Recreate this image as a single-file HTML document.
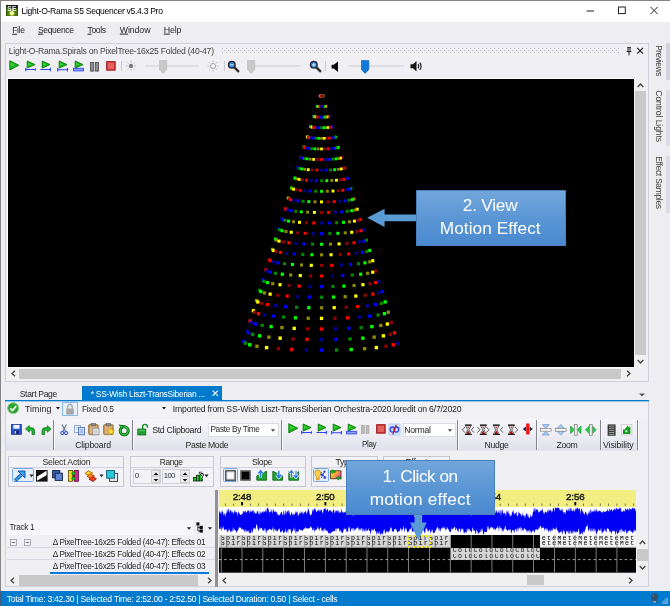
<!DOCTYPE html>
<html lang="en"><head><meta charset="utf-8"><title>Light-O-Rama S5 Sequencer</title>
<style>
html,body{margin:0;padding:0;}
body{width:670px;height:606px;overflow:hidden;background:#eeeef2;font-family:"Liberation Sans", sans-serif;position:relative;}
.b{position:absolute;box-sizing:border-box;display:block;}
.t{position:absolute;white-space:nowrap;line-height:1;transform:translateY(-50%);}
.t u{text-decoration:underline;text-underline-offset:1px;}
</style></head><body>
<div id="root" style="position:absolute;left:0;top:0;width:670px;height:606px;will-change:transform;">
<div class="b" style="left:0px;top:0px;width:670px;height:22px;background:#ffffff;"></div>
<div class="b" style="left:0px;top:0px;width:670px;height:1px;background:#868686;"></div>
<div class="b" style="left:0px;top:0px;width:1px;height:606px;background:#858585;"></div>
<svg class="b" style="left:6px;top:4.6px;" width="12" height="11.4" viewBox="0 0 12 11.4"><defs><radialGradient id="bg1"><stop offset="0" stop-color="#ffffff"/><stop offset="0.45" stop-color="#f4f48a"/><stop offset="1" stop-color="#8aa81a" stop-opacity="0"/></radialGradient></defs><rect x="0" y="0" width="12" height="11.4" fill="#4b7a0c"/><rect x="0" y="0" width="12" height="3.4" fill="#10160c"/><rect x="0" y="0.8" width="0.8" height="10.6" fill="#2c4a08"/><rect x="11.2" y="0.8" width="0.8" height="10.6" fill="#2c4a08"/><circle cx="5.9" cy="8.2" r="3.6" fill="url(#bg1)"/><text x="6" y="6.2" font-size="6.6" font-weight="bold" text-anchor="middle" fill="#f4f4f4" font-family="Liberation Sans, sans-serif" letter-spacing="0.3">SE</text></svg>
<svg class="b" style="left:580px;top:2px;" width="86" height="18" viewBox="0 0 86 18"><path d="M6.5 9 H14" stroke="#222" stroke-width="1" fill="none"/><rect x="38.5" y="5" width="6.8" height="6.6" stroke="#222" stroke-width="1" fill="none"/><path d="M70.6 5 L77.6 12 M77.6 5 L70.6 12" stroke="#222" stroke-width="1" fill="none"/></svg>
<div class="b" style="left:665.6px;top:43px;width:4.4px;height:37px;background:#d2d2df;"></div>
<div class="b" style="left:665.6px;top:89.5px;width:4.4px;height:56px;background:#dcdce7;"></div>
<div class="b" style="left:665.6px;top:155.5px;width:4.4px;height:57.5px;background:#dcdce7;"></div>
<div class="b" style="left:5px;top:43px;width:644px;height:339px;background:#f0f0f4;border:1px solid #cfd0dc;"></div>
<svg class="b" style="left:222px;top:48px;" width="398" height="5" viewBox="0 0 398 5"><defs><pattern id="gp" width="4" height="4" patternUnits="userSpaceOnUse"><rect x="0" y="0" width="1" height="1" fill="#b4b4c2"/><rect x="2" y="2" width="1" height="1" fill="#b4b4c2"/></pattern></defs><rect width="404" height="5" fill="url(#gp)"/></svg>
<svg class="b" style="left:624px;top:46px;" width="22" height="10" viewBox="0 0 22 10"><path d="M3.4 1.6 H6.8 M4 1.6 V5.6 M6 1.6 V5.6 M2.6 5.6 H7.4 M5 5.6 V9.4" stroke="#1e1e1e" stroke-width="1" fill="none"/><path d="M13.2 1.8 L19 7.6 M19 1.8 L13.2 7.6" stroke="#1e1e1e" stroke-width="1.2" fill="none"/></svg>
<svg class="b" style="left:9px;top:60px;" width="12" height="13" viewBox="0 0 12 13"><path d="M0.8 0.7 L9.8 5.3 L0.8 9.9 Z" fill="#16b816" stroke="#0b7a0b" stroke-width="0.9" stroke-linejoin="round"/><path d="M1.8 2.6 L6.4 5.1 L1.8 6 Z" fill="#3fd43f"/></svg>
<svg class="b" style="left:24.5px;top:60px;" width="12" height="13" viewBox="0 0 12 13"><path d="M2.2 1 L10 4.6 L2.2 8.1 Z" fill="#16b816" stroke="#0b7a0b" stroke-width="0.9" stroke-linejoin="round"/><path d="M3 2.8 L6.6 4.5 L3 5.2 Z" fill="#3fd43f"/><path d="M0.7 7.8 V11.2 M0.7 9.5 H10.4 M10.4 8.2 V10.8" stroke="#2a44f4" stroke-width="1.1" fill="none"/></svg>
<svg class="b" style="left:40px;top:60px;" width="12" height="13" viewBox="0 0 12 13"><path d="M2.2 1 L10 4.6 L2.2 8.1 Z" fill="#16b816" stroke="#0b7a0b" stroke-width="0.9" stroke-linejoin="round"/><path d="M3 2.8 L6.6 4.5 L3 5.2 Z" fill="#3fd43f"/><path d="M0.4 9.5 H10.4 M10.4 7.8 V11.2" stroke="#2a44f4" stroke-width="1.1" fill="none"/></svg>
<svg class="b" style="left:56.5px;top:60px;" width="12" height="13" viewBox="0 0 12 13"><path d="M2.2 1 L10 4.6 L2.2 8.1 Z" fill="#16b816" stroke="#0b7a0b" stroke-width="0.9" stroke-linejoin="round"/><path d="M3 2.8 L6.6 4.5 L3 5.2 Z" fill="#3fd43f"/><path d="M0.7 7.9 V11.5 M0.7 9.8 H10.4 M10.4 7.9 V11.5" stroke="#2a44f4" stroke-width="1.1" fill="none"/></svg>
<svg class="b" style="left:73px;top:60px;" width="12" height="13" viewBox="0 0 12 13"><path d="M2.2 1 L10 4.6 L2.2 8.1 Z" fill="#16b816" stroke="#0b7a0b" stroke-width="0.9" stroke-linejoin="round"/><path d="M3 2.8 L6.6 4.5 L3 5.2 Z" fill="#3fd43f"/><rect x="0.6" y="8.3" width="9.8" height="2.6" fill="#8fa4ff" stroke="#2a44f4" stroke-width="0.9"/></svg>
<svg class="b" style="left:90px;top:60.5px;" width="10" height="12" viewBox="0 0 10 12"><rect x="0.5" y="1.5" width="3.2" height="8.6" fill="#8c8c8c" stroke="#4a4a4a" stroke-width="0.8"/><rect x="5.3" y="1.5" width="3.2" height="8.6" fill="#8c8c8c" stroke="#4a4a4a" stroke-width="0.8"/></svg>
<svg class="b" style="left:106px;top:61px;" width="11" height="11" viewBox="0 0 11 11"><rect x="0.6" y="0.6" width="8.6" height="8.6" fill="#cf3434" stroke="#9a2020" stroke-width="0.9"/><rect x="1.8" y="1.8" width="6.2" height="6.2" fill="#e66262"/></svg>
<div class="b" style="left:121.2px;top:60.5px;width:1px;height:10.5px;background:#cbcbd4;"></div>
<svg class="b" style="left:123.9px;top:59.3px;" width="14" height="14" viewBox="0 0 14 14"><g transform="translate(7 7)"><circle r="2.2" fill="#7c7c7c"/><path d="M3.50 0.00 L5.10 0.00" stroke="#b4b4b4" stroke-width="0.9"/><path d="M2.47 2.47 L3.61 3.61" stroke="#b4b4b4" stroke-width="0.9"/><path d="M0.00 3.50 L0.00 5.10" stroke="#b4b4b4" stroke-width="0.9"/><path d="M-2.47 2.47 L-3.61 3.61" stroke="#b4b4b4" stroke-width="0.9"/><path d="M-3.50 0.00 L-5.10 0.00" stroke="#b4b4b4" stroke-width="0.9"/><path d="M-2.47 -2.47 L-3.61 -3.61" stroke="#b4b4b4" stroke-width="0.9"/><path d="M-0.00 -3.50 L-0.00 -5.10" stroke="#b4b4b4" stroke-width="0.9"/><path d="M2.47 -2.47 L3.61 -3.61" stroke="#b4b4b4" stroke-width="0.9"/></g></svg>
<svg class="b" style="left:205.6px;top:59.400000000000006px;" width="14" height="14" viewBox="0 0 14 14"><g transform="translate(7 7)"><circle r="2.5" fill="#f6f6f6" stroke="#a4a4a4" stroke-width="1"/><path d="M3.80 0.00 L5.40 0.00" stroke="#b4b4b4" stroke-width="0.9"/><path d="M2.69 2.69 L3.82 3.82" stroke="#b4b4b4" stroke-width="0.9"/><path d="M0.00 3.80 L0.00 5.40" stroke="#b4b4b4" stroke-width="0.9"/><path d="M-2.69 2.69 L-3.82 3.82" stroke="#b4b4b4" stroke-width="0.9"/><path d="M-3.80 0.00 L-5.40 0.00" stroke="#b4b4b4" stroke-width="0.9"/><path d="M-2.69 -2.69 L-3.82 -3.82" stroke="#b4b4b4" stroke-width="0.9"/><path d="M-0.00 -3.80 L-0.00 -5.40" stroke="#b4b4b4" stroke-width="0.9"/><path d="M2.69 -2.69 L3.82 -3.82" stroke="#b4b4b4" stroke-width="0.9"/></g></svg>
<div class="b" style="left:145px;top:64.7px;width:54px;height:2.8px;background:#dfdfe3;"></div>
<svg class="b" style="left:158.8px;top:59.800000000000004px;" width="9" height="15" viewBox="0 0 9 15"><path d="M0.4 0.4 H7.8 V9.4 L4.1 13.4 L0.4 9.4 Z" fill="#c9c9c9" stroke="#bdbdbd" stroke-width="0.7"/></svg>
<div class="b" style="left:223.5px;top:60.5px;width:1px;height:10.5px;background:#cbcbd4;"></div>
<svg class="b" style="left:226.5px;top:60.3px;" width="13" height="13" viewBox="0 0 13 13"><path d="M7.6 7.6 L11.2 11.2" stroke="#9a9a9a" stroke-width="3" stroke-linecap="round"/><path d="M7.4 7.4 L11.2 11.2" stroke="#222" stroke-width="1.9" stroke-linecap="round"/><circle cx="4.8" cy="4.8" r="3.3" fill="#2f86e0" stroke="#2a2a34" stroke-width="1.4"/><path d="M3 4.8 H6.6" stroke="#bfe0ff" stroke-width="1.2"/></svg>
<div class="b" style="left:254px;top:64.7px;width:47px;height:2.8px;background:#dfdfe3;"></div>
<svg class="b" style="left:246.6px;top:59.800000000000004px;" width="9" height="15" viewBox="0 0 9 15"><path d="M0.4 0.4 H7.8 V9.4 L4.1 13.4 L0.4 9.4 Z" fill="#c9c9c9" stroke="#bdbdbd" stroke-width="0.7"/></svg>
<svg class="b" style="left:308.59999999999997px;top:60.3px;" width="13" height="13" viewBox="0 0 13 13"><path d="M7.6 7.6 L11.2 11.2" stroke="#9a9a9a" stroke-width="3" stroke-linecap="round"/><path d="M7.4 7.4 L11.2 11.2" stroke="#222" stroke-width="1.9" stroke-linecap="round"/><circle cx="4.8" cy="4.8" r="3.3" fill="#2f86e0" stroke="#2a2a34" stroke-width="1.4"/><path d="M3 4.8 H6.6" stroke="#bfe0ff" stroke-width="1.2"/><path d="M4.8 3 V6.6" stroke="#bfe0ff" stroke-width="1.2"/></svg>
<div class="b" style="left:325.2px;top:60.5px;width:1px;height:10.5px;background:#cbcbd4;"></div>
<svg class="b" style="left:330.6px;top:60.6px;" width="9" height="12" viewBox="0 0 9 12"><path d="M0.6 3.8 H2.8 L7 0.5 V10.9 L2.8 7.6 H0.6 Z" fill="#0a0a0a"/></svg>
<div class="b" style="left:349px;top:64.7px;width:54.5px;height:2.8px;background:#dfdfe3;"></div>
<svg class="b" style="left:360.6px;top:59.800000000000004px;" width="9" height="15" viewBox="0 0 9 15"><path d="M0.4 0.4 H7.8 V9.4 L4.1 13.4 L0.4 9.4 Z" fill="#0f78d8" stroke="#0a64c0" stroke-width="0.7"/></svg>
<svg class="b" style="left:410px;top:60px;" width="14" height="13" viewBox="0 0 14 13"><path d="M0.5 4.3 H3 L6.5 1 V11.5 L3 8.2 H0.5 Z" fill="#111"/><path d="M8 4.2 Q9.6 6.2 8 8.4 M9.8 2.6 Q12.4 6.2 9.8 10 " stroke="#111" stroke-width="1.1" fill="none"/></svg>
<div class="b" style="left:7px;top:78px;width:627px;height:290px;background:#fbfbfd;"></div>
<div class="b" style="left:8px;top:79px;width:626px;height:288.4px;background:#000;"></div>
<div class="b" style="left:635px;top:79px;width:11px;height:288.5px;background:#f0f0f0;"></div>
<div class="b" style="left:635px;top:91px;width:10.5px;height:264px;background:#c9c9c9;"></div>
<svg class="b" style="left:635px;top:80px;" width="11" height="10" viewBox="0 0 11 10"><path d="M2.7 7 L5.5 4 L8.3 7" stroke="#444" stroke-width="1.3" fill="none"/></svg>
<svg class="b" style="left:635px;top:357px;" width="11" height="10" viewBox="0 0 11 10"><path d="M2.7 3 L5.5 6 L8.3 3" stroke="#444" stroke-width="1.3" fill="none"/></svg>
<div class="b" style="left:7.5px;top:368px;width:626.5px;height:11px;background:#f0f0f0;"></div>
<div class="b" style="left:19px;top:368.5px;width:602px;height:10.5px;background:#c9c9c9;"></div>
<svg class="b" style="left:8px;top:368px;" width="11" height="11" viewBox="0 0 11 11"><path d="M7 2.7 L4 5.5 L7 8.3" stroke="#444" stroke-width="1.3" fill="none"/></svg>
<svg class="b" style="left:623px;top:368px;" width="11" height="11" viewBox="0 0 11 11"><path d="M4 2.7 L7 5.5 L4 8.3" stroke="#444" stroke-width="1.3" fill="none"/></svg>
<svg class="b" style="left:200px;top:88px;" width="240" height="272" viewBox="0 0 240 272"><g style="filter:blur(0.35px)"><rect x="118.65" y="6.53" width="2.60" height="2.60" fill="#900000"/><rect x="118.68" y="6.56" width="2.60" height="2.60" fill="#ff0000"/><rect x="121.72" y="6.56" width="2.60" height="2.60" fill="#ffff00"/><rect x="118.77" y="6.59" width="2.60" height="2.60" fill="#000090"/><rect x="121.63" y="6.59" width="2.60" height="2.60" fill="#8c8c00"/><rect x="118.91" y="6.62" width="2.60" height="2.60" fill="#0000ff"/><rect x="121.49" y="6.62" width="2.60" height="2.60" fill="#00ff00"/><rect x="119.10" y="6.65" width="2.60" height="2.60" fill="#008800"/><rect x="121.30" y="6.65" width="2.60" height="2.60" fill="#008800"/><rect x="119.34" y="6.67" width="2.60" height="2.60" fill="#00ff00"/><rect x="121.06" y="6.67" width="2.60" height="2.60" fill="#0000ff"/><rect x="119.61" y="6.69" width="2.60" height="2.60" fill="#8c8c00"/><rect x="120.79" y="6.69" width="2.60" height="2.60" fill="#000090"/><rect x="119.90" y="6.70" width="2.60" height="2.60" fill="#ffff00"/><rect x="120.50" y="6.70" width="2.60" height="2.60" fill="#ff0000"/><rect x="120.20" y="6.70" width="2.60" height="2.60" fill="#900000"/><rect x="115.46" y="16.74" width="2.63" height="2.63" fill="#000090"/><rect x="115.55" y="16.85" width="2.63" height="2.63" fill="#0000ff"/><rect x="124.81" y="16.85" width="2.63" height="2.63" fill="#ff0000"/><rect x="115.82" y="16.95" width="2.63" height="2.63" fill="#008800"/><rect x="124.54" y="16.95" width="2.63" height="2.63" fill="#900000"/><rect x="116.26" y="17.04" width="2.63" height="2.63" fill="#00ff00"/><rect x="124.11" y="17.04" width="2.63" height="2.63" fill="#ffff00"/><rect x="116.85" y="17.12" width="2.63" height="2.63" fill="#8c8c00"/><rect x="123.52" y="17.12" width="2.63" height="2.63" fill="#8c8c00"/><rect x="117.56" y="17.18" width="2.63" height="2.63" fill="#ffff00"/><rect x="122.81" y="17.18" width="2.63" height="2.63" fill="#00ff00"/><rect x="118.38" y="17.23" width="2.63" height="2.63" fill="#900000"/><rect x="121.99" y="17.23" width="2.63" height="2.63" fill="#008800"/><rect x="119.26" y="17.26" width="2.63" height="2.63" fill="#ff0000"/><rect x="121.10" y="17.26" width="2.63" height="2.63" fill="#0000ff"/><rect x="120.18" y="17.27" width="2.63" height="2.63" fill="#000090"/><rect x="112.28" y="26.96" width="2.67" height="2.67" fill="#0000ff"/><rect x="112.43" y="27.14" width="2.67" height="2.67" fill="#008800"/><rect x="127.91" y="27.14" width="2.67" height="2.67" fill="#000090"/><rect x="112.88" y="27.30" width="2.67" height="2.67" fill="#00ff00"/><rect x="127.46" y="27.30" width="2.67" height="2.67" fill="#ff0000"/><rect x="113.61" y="27.45" width="2.67" height="2.67" fill="#8c8c00"/><rect x="126.73" y="27.45" width="2.67" height="2.67" fill="#900000"/><rect x="114.59" y="27.59" width="2.67" height="2.67" fill="#ffff00"/><rect x="125.75" y="27.59" width="2.67" height="2.67" fill="#ffff00"/><rect x="115.78" y="27.70" width="2.67" height="2.67" fill="#900000"/><rect x="124.55" y="27.70" width="2.67" height="2.67" fill="#8c8c00"/><rect x="117.15" y="27.78" width="2.67" height="2.67" fill="#ff0000"/><rect x="123.19" y="27.78" width="2.67" height="2.67" fill="#00ff00"/><rect x="118.63" y="27.83" width="2.67" height="2.67" fill="#000090"/><rect x="121.71" y="27.83" width="2.67" height="2.67" fill="#008800"/><rect x="120.17" y="27.85" width="2.67" height="2.67" fill="#0000ff"/><rect x="109.09" y="37.18" width="2.70" height="2.70" fill="#008800"/><rect x="109.30" y="37.42" width="2.70" height="2.70" fill="#00ff00"/><rect x="131.00" y="37.42" width="2.70" height="2.70" fill="#0000ff"/><rect x="109.93" y="37.66" width="2.70" height="2.70" fill="#8c8c00"/><rect x="130.37" y="37.66" width="2.70" height="2.70" fill="#000090"/><rect x="110.95" y="37.87" width="2.70" height="2.70" fill="#ffff00"/><rect x="129.35" y="37.87" width="2.70" height="2.70" fill="#ff0000"/><rect x="112.33" y="38.06" width="2.70" height="2.70" fill="#900000"/><rect x="127.97" y="38.06" width="2.70" height="2.70" fill="#900000"/><rect x="114.01" y="38.21" width="2.70" height="2.70" fill="#ff0000"/><rect x="126.29" y="38.21" width="2.70" height="2.70" fill="#ffff00"/><rect x="115.92" y="38.33" width="2.70" height="2.70" fill="#000090"/><rect x="124.38" y="38.33" width="2.70" height="2.70" fill="#8c8c00"/><rect x="117.99" y="38.40" width="2.70" height="2.70" fill="#0000ff"/><rect x="122.31" y="38.40" width="2.70" height="2.70" fill="#00ff00"/><rect x="120.15" y="38.42" width="2.70" height="2.70" fill="#008800"/><rect x="105.90" y="47.40" width="2.73" height="2.73" fill="#8c8c00"/><rect x="106.18" y="47.71" width="2.73" height="2.73" fill="#ffff00"/><rect x="134.09" y="47.71" width="2.73" height="2.73" fill="#00ff00"/><rect x="106.99" y="48.01" width="2.73" height="2.73" fill="#900000"/><rect x="133.28" y="48.01" width="2.73" height="2.73" fill="#008800"/><rect x="108.30" y="48.29" width="2.73" height="2.73" fill="#ff0000"/><rect x="131.97" y="48.29" width="2.73" height="2.73" fill="#0000ff"/><rect x="110.07" y="48.53" width="2.73" height="2.73" fill="#000090"/><rect x="130.20" y="48.53" width="2.73" height="2.73" fill="#000090"/><rect x="112.23" y="48.72" width="2.73" height="2.73" fill="#0000ff"/><rect x="128.04" y="48.72" width="2.73" height="2.73" fill="#ff0000"/><rect x="114.69" y="48.87" width="2.73" height="2.73" fill="#008800"/><rect x="125.58" y="48.87" width="2.73" height="2.73" fill="#900000"/><rect x="117.36" y="48.96" width="2.73" height="2.73" fill="#00ff00"/><rect x="122.91" y="48.96" width="2.73" height="2.73" fill="#ffff00"/><rect x="120.13" y="48.99" width="2.73" height="2.73" fill="#8c8c00"/><rect x="102.72" y="57.62" width="2.77" height="2.77" fill="#ffff00"/><rect x="103.05" y="58.00" width="2.77" height="2.77" fill="#900000"/><rect x="137.18" y="58.00" width="2.77" height="2.77" fill="#8c8c00"/><rect x="104.04" y="58.36" width="2.77" height="2.77" fill="#ff0000"/><rect x="136.19" y="58.36" width="2.77" height="2.77" fill="#00ff00"/><rect x="105.65" y="58.70" width="2.77" height="2.77" fill="#000090"/><rect x="134.58" y="58.70" width="2.77" height="2.77" fill="#008800"/><rect x="107.81" y="59.00" width="2.77" height="2.77" fill="#0000ff"/><rect x="132.42" y="59.00" width="2.77" height="2.77" fill="#0000ff"/><rect x="110.45" y="59.24" width="2.77" height="2.77" fill="#008800"/><rect x="129.78" y="59.24" width="2.77" height="2.77" fill="#000090"/><rect x="113.46" y="59.42" width="2.77" height="2.77" fill="#00ff00"/><rect x="126.78" y="59.42" width="2.77" height="2.77" fill="#ff0000"/><rect x="116.72" y="59.53" width="2.77" height="2.77" fill="#8c8c00"/><rect x="123.51" y="59.53" width="2.77" height="2.77" fill="#900000"/><rect x="120.12" y="59.57" width="2.77" height="2.77" fill="#ffff00"/><rect x="99.53" y="67.84" width="2.80" height="2.80" fill="#ff0000"/><rect x="99.93" y="68.29" width="2.80" height="2.80" fill="#000090"/><rect x="140.27" y="68.29" width="2.80" height="2.80" fill="#900000"/><rect x="101.10" y="68.72" width="2.80" height="2.80" fill="#0000ff"/><rect x="139.10" y="68.72" width="2.80" height="2.80" fill="#ffff00"/><rect x="103.00" y="69.12" width="2.80" height="2.80" fill="#008800"/><rect x="137.20" y="69.12" width="2.80" height="2.80" fill="#8c8c00"/><rect x="105.55" y="69.47" width="2.80" height="2.80" fill="#00ff00"/><rect x="134.65" y="69.47" width="2.80" height="2.80" fill="#00ff00"/><rect x="108.67" y="69.75" width="2.80" height="2.80" fill="#8c8c00"/><rect x="131.53" y="69.75" width="2.80" height="2.80" fill="#008800"/><rect x="112.23" y="69.96" width="2.80" height="2.80" fill="#ffff00"/><rect x="127.97" y="69.96" width="2.80" height="2.80" fill="#0000ff"/><rect x="116.09" y="70.10" width="2.80" height="2.80" fill="#900000"/><rect x="124.11" y="70.10" width="2.80" height="2.80" fill="#000090"/><rect x="120.10" y="70.14" width="2.80" height="2.80" fill="#ff0000"/><rect x="96.34" y="78.05" width="2.83" height="2.83" fill="#000090"/><rect x="96.80" y="78.57" width="2.83" height="2.83" fill="#0000ff"/><rect x="143.37" y="78.57" width="2.83" height="2.83" fill="#ff0000"/><rect x="98.15" y="79.07" width="2.83" height="2.83" fill="#008800"/><rect x="142.02" y="79.07" width="2.83" height="2.83" fill="#900000"/><rect x="100.34" y="79.53" width="2.83" height="2.83" fill="#00ff00"/><rect x="139.82" y="79.53" width="2.83" height="2.83" fill="#ffff00"/><rect x="103.30" y="79.93" width="2.83" height="2.83" fill="#8c8c00"/><rect x="136.87" y="79.93" width="2.83" height="2.83" fill="#8c8c00"/><rect x="106.89" y="80.27" width="2.83" height="2.83" fill="#ffff00"/><rect x="133.27" y="80.27" width="2.83" height="2.83" fill="#00ff00"/><rect x="111.00" y="80.51" width="2.83" height="2.83" fill="#900000"/><rect x="129.17" y="80.51" width="2.83" height="2.83" fill="#008800"/><rect x="115.45" y="80.66" width="2.83" height="2.83" fill="#ff0000"/><rect x="124.71" y="80.66" width="2.83" height="2.83" fill="#0000ff"/><rect x="120.08" y="80.71" width="2.83" height="2.83" fill="#000090"/><rect x="93.16" y="88.27" width="2.87" height="2.87" fill="#008800"/><rect x="93.67" y="88.86" width="2.87" height="2.87" fill="#00ff00"/><rect x="146.46" y="88.86" width="2.87" height="2.87" fill="#0000ff"/><rect x="95.21" y="89.43" width="2.87" height="2.87" fill="#8c8c00"/><rect x="144.93" y="89.43" width="2.87" height="2.87" fill="#000090"/><rect x="97.69" y="89.95" width="2.87" height="2.87" fill="#ffff00"/><rect x="142.44" y="89.95" width="2.87" height="2.87" fill="#ff0000"/><rect x="101.04" y="90.40" width="2.87" height="2.87" fill="#900000"/><rect x="139.09" y="90.40" width="2.87" height="2.87" fill="#900000"/><rect x="105.12" y="90.78" width="2.87" height="2.87" fill="#ff0000"/><rect x="135.02" y="90.78" width="2.87" height="2.87" fill="#ffff00"/><rect x="109.77" y="91.06" width="2.87" height="2.87" fill="#000090"/><rect x="130.36" y="91.06" width="2.87" height="2.87" fill="#8c8c00"/><rect x="114.82" y="91.23" width="2.87" height="2.87" fill="#0000ff"/><rect x="125.32" y="91.23" width="2.87" height="2.87" fill="#00ff00"/><rect x="120.07" y="91.29" width="2.87" height="2.87" fill="#008800"/><rect x="89.97" y="98.49" width="2.90" height="2.90" fill="#00ff00"/><rect x="90.55" y="99.15" width="2.90" height="2.90" fill="#8c8c00"/><rect x="149.55" y="99.15" width="2.90" height="2.90" fill="#008800"/><rect x="92.26" y="99.78" width="2.90" height="2.90" fill="#ffff00"/><rect x="147.84" y="99.78" width="2.90" height="2.90" fill="#0000ff"/><rect x="95.04" y="100.36" width="2.90" height="2.90" fill="#900000"/><rect x="145.06" y="100.36" width="2.90" height="2.90" fill="#000090"/><rect x="98.78" y="100.87" width="2.90" height="2.90" fill="#ff0000"/><rect x="141.32" y="100.87" width="2.90" height="2.90" fill="#ff0000"/><rect x="103.34" y="101.29" width="2.90" height="2.90" fill="#000090"/><rect x="136.76" y="101.29" width="2.90" height="2.90" fill="#900000"/><rect x="108.54" y="101.60" width="2.90" height="2.90" fill="#0000ff"/><rect x="131.56" y="101.60" width="2.90" height="2.90" fill="#ffff00"/><rect x="114.18" y="101.80" width="2.90" height="2.90" fill="#008800"/><rect x="125.92" y="101.80" width="2.90" height="2.90" fill="#8c8c00"/><rect x="120.05" y="101.86" width="2.90" height="2.90" fill="#00ff00"/><rect x="86.78" y="108.71" width="2.93" height="2.93" fill="#ffff00"/><rect x="87.42" y="109.44" width="2.93" height="2.93" fill="#900000"/><rect x="152.64" y="109.44" width="2.93" height="2.93" fill="#8c8c00"/><rect x="89.31" y="110.13" width="2.93" height="2.93" fill="#ff0000"/><rect x="150.75" y="110.13" width="2.93" height="2.93" fill="#00ff00"/><rect x="92.39" y="110.78" width="2.93" height="2.93" fill="#000090"/><rect x="147.68" y="110.78" width="2.93" height="2.93" fill="#008800"/><rect x="96.52" y="111.34" width="2.93" height="2.93" fill="#0000ff"/><rect x="143.54" y="111.34" width="2.93" height="2.93" fill="#0000ff"/><rect x="101.56" y="111.81" width="2.93" height="2.93" fill="#008800"/><rect x="138.51" y="111.81" width="2.93" height="2.93" fill="#000090"/><rect x="107.31" y="112.15" width="2.93" height="2.93" fill="#00ff00"/><rect x="132.76" y="112.15" width="2.93" height="2.93" fill="#ff0000"/><rect x="113.55" y="112.36" width="2.93" height="2.93" fill="#8c8c00"/><rect x="126.52" y="112.36" width="2.93" height="2.93" fill="#900000"/><rect x="120.03" y="112.43" width="2.93" height="2.93" fill="#ffff00"/><rect x="83.60" y="118.93" width="2.97" height="2.97" fill="#900000"/><rect x="84.30" y="119.72" width="2.97" height="2.97" fill="#ff0000"/><rect x="155.74" y="119.72" width="2.97" height="2.97" fill="#ffff00"/><rect x="86.37" y="120.49" width="2.97" height="2.97" fill="#000090"/><rect x="153.66" y="120.49" width="2.97" height="2.97" fill="#8c8c00"/><rect x="89.73" y="121.19" width="2.97" height="2.97" fill="#0000ff"/><rect x="150.30" y="121.19" width="2.97" height="2.97" fill="#00ff00"/><rect x="94.26" y="121.81" width="2.97" height="2.97" fill="#008800"/><rect x="145.77" y="121.81" width="2.97" height="2.97" fill="#008800"/><rect x="99.78" y="122.32" width="2.97" height="2.97" fill="#00ff00"/><rect x="140.25" y="122.32" width="2.97" height="2.97" fill="#0000ff"/><rect x="106.08" y="122.70" width="2.97" height="2.97" fill="#8c8c00"/><rect x="133.95" y="122.70" width="2.97" height="2.97" fill="#000090"/><rect x="112.91" y="122.93" width="2.97" height="2.97" fill="#ffff00"/><rect x="127.12" y="122.93" width="2.97" height="2.97" fill="#ff0000"/><rect x="120.02" y="123.01" width="2.97" height="2.97" fill="#900000"/><rect x="80.41" y="129.15" width="3.00" height="3.00" fill="#000090"/><rect x="81.17" y="130.01" width="3.00" height="3.00" fill="#0000ff"/><rect x="158.83" y="130.01" width="3.00" height="3.00" fill="#ff0000"/><rect x="83.42" y="130.84" width="3.00" height="3.00" fill="#008800"/><rect x="156.58" y="130.84" width="3.00" height="3.00" fill="#900000"/><rect x="87.08" y="131.61" width="3.00" height="3.00" fill="#00ff00"/><rect x="152.92" y="131.61" width="3.00" height="3.00" fill="#ffff00"/><rect x="92.01" y="132.28" width="3.00" height="3.00" fill="#8c8c00"/><rect x="147.99" y="132.28" width="3.00" height="3.00" fill="#8c8c00"/><rect x="98.00" y="132.83" width="3.00" height="3.00" fill="#ffff00"/><rect x="142.00" y="132.83" width="3.00" height="3.00" fill="#00ff00"/><rect x="104.85" y="133.24" width="3.00" height="3.00" fill="#900000"/><rect x="135.15" y="133.24" width="3.00" height="3.00" fill="#008800"/><rect x="112.28" y="133.49" width="3.00" height="3.00" fill="#ff0000"/><rect x="127.72" y="133.49" width="3.00" height="3.00" fill="#0000ff"/><rect x="120.00" y="133.58" width="3.00" height="3.00" fill="#000090"/><rect x="77.22" y="139.36" width="3.03" height="3.03" fill="#0000ff"/><rect x="78.04" y="140.30" width="3.03" height="3.03" fill="#008800"/><rect x="161.92" y="140.30" width="3.03" height="3.03" fill="#000090"/><rect x="80.48" y="141.20" width="3.03" height="3.03" fill="#00ff00"/><rect x="159.49" y="141.20" width="3.03" height="3.03" fill="#ff0000"/><rect x="84.43" y="142.02" width="3.03" height="3.03" fill="#8c8c00"/><rect x="155.54" y="142.02" width="3.03" height="3.03" fill="#900000"/><rect x="89.75" y="142.75" width="3.03" height="3.03" fill="#ffff00"/><rect x="150.22" y="142.75" width="3.03" height="3.03" fill="#ffff00"/><rect x="96.23" y="143.35" width="3.03" height="3.03" fill="#900000"/><rect x="143.74" y="143.35" width="3.03" height="3.03" fill="#8c8c00"/><rect x="103.62" y="143.79" width="3.03" height="3.03" fill="#ff0000"/><rect x="136.35" y="143.79" width="3.03" height="3.03" fill="#00ff00"/><rect x="111.64" y="144.06" width="3.03" height="3.03" fill="#000090"/><rect x="128.33" y="144.06" width="3.03" height="3.03" fill="#008800"/><rect x="119.98" y="144.15" width="3.03" height="3.03" fill="#0000ff"/><rect x="74.04" y="149.58" width="3.07" height="3.07" fill="#00ff00"/><rect x="74.92" y="150.59" width="3.07" height="3.07" fill="#8c8c00"/><rect x="165.01" y="150.59" width="3.07" height="3.07" fill="#008800"/><rect x="77.53" y="151.55" width="3.07" height="3.07" fill="#ffff00"/><rect x="162.40" y="151.55" width="3.07" height="3.07" fill="#0000ff"/><rect x="81.78" y="152.44" width="3.07" height="3.07" fill="#900000"/><rect x="158.16" y="152.44" width="3.07" height="3.07" fill="#000090"/><rect x="87.49" y="153.22" width="3.07" height="3.07" fill="#ff0000"/><rect x="152.44" y="153.22" width="3.07" height="3.07" fill="#ff0000"/><rect x="94.45" y="153.86" width="3.07" height="3.07" fill="#000090"/><rect x="145.48" y="153.86" width="3.07" height="3.07" fill="#900000"/><rect x="102.39" y="154.34" width="3.07" height="3.07" fill="#0000ff"/><rect x="137.54" y="154.34" width="3.07" height="3.07" fill="#ffff00"/><rect x="111.01" y="154.63" width="3.07" height="3.07" fill="#008800"/><rect x="128.93" y="154.63" width="3.07" height="3.07" fill="#8c8c00"/><rect x="119.97" y="154.73" width="3.07" height="3.07" fill="#00ff00"/><rect x="70.85" y="159.80" width="3.10" height="3.10" fill="#8c8c00"/><rect x="71.79" y="160.87" width="3.10" height="3.10" fill="#ffff00"/><rect x="168.11" y="160.87" width="3.10" height="3.10" fill="#00ff00"/><rect x="74.59" y="161.91" width="3.10" height="3.10" fill="#900000"/><rect x="165.31" y="161.91" width="3.10" height="3.10" fill="#008800"/><rect x="79.12" y="162.86" width="3.10" height="3.10" fill="#ff0000"/><rect x="160.78" y="162.86" width="3.10" height="3.10" fill="#0000ff"/><rect x="85.23" y="163.69" width="3.10" height="3.10" fill="#000090"/><rect x="154.67" y="163.69" width="3.10" height="3.10" fill="#000090"/><rect x="92.67" y="164.37" width="3.10" height="3.10" fill="#0000ff"/><rect x="147.23" y="164.37" width="3.10" height="3.10" fill="#ff0000"/><rect x="101.16" y="164.88" width="3.10" height="3.10" fill="#008800"/><rect x="138.74" y="164.88" width="3.10" height="3.10" fill="#900000"/><rect x="110.37" y="165.19" width="3.10" height="3.10" fill="#00ff00"/><rect x="129.53" y="165.19" width="3.10" height="3.10" fill="#ffff00"/><rect x="119.95" y="165.30" width="3.10" height="3.10" fill="#8c8c00"/><rect x="67.66" y="170.02" width="3.13" height="3.13" fill="#900000"/><rect x="68.67" y="171.16" width="3.13" height="3.13" fill="#ff0000"/><rect x="171.20" y="171.16" width="3.13" height="3.13" fill="#ffff00"/><rect x="71.64" y="172.26" width="3.13" height="3.13" fill="#000090"/><rect x="168.22" y="172.26" width="3.13" height="3.13" fill="#8c8c00"/><rect x="76.47" y="173.27" width="3.13" height="3.13" fill="#0000ff"/><rect x="163.39" y="173.27" width="3.13" height="3.13" fill="#00ff00"/><rect x="82.97" y="174.16" width="3.13" height="3.13" fill="#008800"/><rect x="156.89" y="174.16" width="3.13" height="3.13" fill="#008800"/><rect x="90.89" y="174.89" width="3.13" height="3.13" fill="#00ff00"/><rect x="148.97" y="174.89" width="3.13" height="3.13" fill="#0000ff"/><rect x="99.93" y="175.43" width="3.13" height="3.13" fill="#8c8c00"/><rect x="139.94" y="175.43" width="3.13" height="3.13" fill="#000090"/><rect x="109.74" y="175.76" width="3.13" height="3.13" fill="#ffff00"/><rect x="130.13" y="175.76" width="3.13" height="3.13" fill="#ff0000"/><rect x="119.93" y="175.87" width="3.13" height="3.13" fill="#900000"/><rect x="64.48" y="180.24" width="3.17" height="3.17" fill="#ff0000"/><rect x="65.54" y="181.45" width="3.17" height="3.17" fill="#000090"/><rect x="174.29" y="181.45" width="3.17" height="3.17" fill="#900000"/><rect x="68.70" y="182.61" width="3.17" height="3.17" fill="#0000ff"/><rect x="171.14" y="182.61" width="3.17" height="3.17" fill="#ffff00"/><rect x="73.82" y="183.69" width="3.17" height="3.17" fill="#008800"/><rect x="166.01" y="183.69" width="3.17" height="3.17" fill="#8c8c00"/><rect x="80.71" y="184.63" width="3.17" height="3.17" fill="#00ff00"/><rect x="159.12" y="184.63" width="3.17" height="3.17" fill="#00ff00"/><rect x="89.12" y="185.40" width="3.17" height="3.17" fill="#8c8c00"/><rect x="150.72" y="185.40" width="3.17" height="3.17" fill="#008800"/><rect x="98.70" y="185.97" width="3.17" height="3.17" fill="#ffff00"/><rect x="141.13" y="185.97" width="3.17" height="3.17" fill="#0000ff"/><rect x="109.10" y="186.33" width="3.17" height="3.17" fill="#900000"/><rect x="130.73" y="186.33" width="3.17" height="3.17" fill="#000090"/><rect x="119.92" y="186.45" width="3.17" height="3.17" fill="#ff0000"/><rect x="61.29" y="190.46" width="3.20" height="3.20" fill="#0000ff"/><rect x="62.42" y="191.74" width="3.20" height="3.20" fill="#008800"/><rect x="177.38" y="191.74" width="3.20" height="3.20" fill="#000090"/><rect x="65.75" y="192.97" width="3.20" height="3.20" fill="#00ff00"/><rect x="174.05" y="192.97" width="3.20" height="3.20" fill="#ff0000"/><rect x="71.17" y="194.10" width="3.20" height="3.20" fill="#8c8c00"/><rect x="168.63" y="194.10" width="3.20" height="3.20" fill="#900000"/><rect x="78.46" y="195.10" width="3.20" height="3.20" fill="#ffff00"/><rect x="161.34" y="195.10" width="3.20" height="3.20" fill="#ffff00"/><rect x="87.34" y="195.91" width="3.20" height="3.20" fill="#900000"/><rect x="152.46" y="195.91" width="3.20" height="3.20" fill="#8c8c00"/><rect x="97.47" y="196.52" width="3.20" height="3.20" fill="#ff0000"/><rect x="142.33" y="196.52" width="3.20" height="3.20" fill="#00ff00"/><rect x="108.47" y="196.89" width="3.20" height="3.20" fill="#000090"/><rect x="131.33" y="196.89" width="3.20" height="3.20" fill="#008800"/><rect x="119.90" y="197.02" width="3.20" height="3.20" fill="#0000ff"/><rect x="58.10" y="200.67" width="3.23" height="3.23" fill="#008800"/><rect x="59.29" y="202.02" width="3.23" height="3.23" fill="#00ff00"/><rect x="180.48" y="202.02" width="3.23" height="3.23" fill="#0000ff"/><rect x="62.81" y="203.32" width="3.23" height="3.23" fill="#8c8c00"/><rect x="176.96" y="203.32" width="3.23" height="3.23" fill="#000090"/><rect x="68.52" y="204.52" width="3.23" height="3.23" fill="#ffff00"/><rect x="171.25" y="204.52" width="3.23" height="3.23" fill="#ff0000"/><rect x="76.20" y="205.57" width="3.23" height="3.23" fill="#900000"/><rect x="163.57" y="205.57" width="3.23" height="3.23" fill="#900000"/><rect x="85.56" y="206.43" width="3.23" height="3.23" fill="#ff0000"/><rect x="154.21" y="206.43" width="3.23" height="3.23" fill="#ffff00"/><rect x="96.24" y="207.07" width="3.23" height="3.23" fill="#000090"/><rect x="143.53" y="207.07" width="3.23" height="3.23" fill="#8c8c00"/><rect x="107.83" y="207.46" width="3.23" height="3.23" fill="#0000ff"/><rect x="131.94" y="207.46" width="3.23" height="3.23" fill="#00ff00"/><rect x="119.88" y="207.59" width="3.23" height="3.23" fill="#008800"/><rect x="54.92" y="210.89" width="3.27" height="3.27" fill="#8c8c00"/><rect x="56.16" y="212.31" width="3.27" height="3.27" fill="#ffff00"/><rect x="183.57" y="212.31" width="3.27" height="3.27" fill="#00ff00"/><rect x="59.86" y="213.68" width="3.27" height="3.27" fill="#900000"/><rect x="179.87" y="213.68" width="3.27" height="3.27" fill="#008800"/><rect x="65.86" y="214.93" width="3.27" height="3.27" fill="#ff0000"/><rect x="173.87" y="214.93" width="3.27" height="3.27" fill="#0000ff"/><rect x="73.94" y="216.04" width="3.27" height="3.27" fill="#000090"/><rect x="165.79" y="216.04" width="3.27" height="3.27" fill="#000090"/><rect x="83.78" y="216.94" width="3.27" height="3.27" fill="#0000ff"/><rect x="155.95" y="216.94" width="3.27" height="3.27" fill="#ff0000"/><rect x="95.01" y="217.61" width="3.27" height="3.27" fill="#008800"/><rect x="144.72" y="217.61" width="3.27" height="3.27" fill="#900000"/><rect x="107.20" y="218.03" width="3.27" height="3.27" fill="#00ff00"/><rect x="132.54" y="218.03" width="3.27" height="3.27" fill="#ffff00"/><rect x="119.87" y="218.17" width="3.27" height="3.27" fill="#8c8c00"/><rect x="51.73" y="221.11" width="3.30" height="3.30" fill="#ffff00"/><rect x="53.04" y="222.60" width="3.30" height="3.30" fill="#900000"/><rect x="186.66" y="222.60" width="3.30" height="3.30" fill="#8c8c00"/><rect x="56.92" y="224.03" width="3.30" height="3.30" fill="#ff0000"/><rect x="182.78" y="224.03" width="3.30" height="3.30" fill="#00ff00"/><rect x="63.21" y="225.35" width="3.30" height="3.30" fill="#000090"/><rect x="176.49" y="225.35" width="3.30" height="3.30" fill="#008800"/><rect x="71.68" y="226.51" width="3.30" height="3.30" fill="#0000ff"/><rect x="168.02" y="226.51" width="3.30" height="3.30" fill="#0000ff"/><rect x="82.00" y="227.45" width="3.30" height="3.30" fill="#008800"/><rect x="157.70" y="227.45" width="3.30" height="3.30" fill="#000090"/><rect x="93.78" y="228.16" width="3.30" height="3.30" fill="#00ff00"/><rect x="145.92" y="228.16" width="3.30" height="3.30" fill="#ff0000"/><rect x="106.56" y="228.59" width="3.30" height="3.30" fill="#8c8c00"/><rect x="133.14" y="228.59" width="3.30" height="3.30" fill="#900000"/><rect x="119.85" y="228.74" width="3.30" height="3.30" fill="#ffff00"/><rect x="48.54" y="231.33" width="3.33" height="3.33" fill="#ff0000"/><rect x="49.91" y="232.89" width="3.33" height="3.33" fill="#000090"/><rect x="189.75" y="232.89" width="3.33" height="3.33" fill="#900000"/><rect x="53.97" y="234.38" width="3.33" height="3.33" fill="#0000ff"/><rect x="185.70" y="234.38" width="3.33" height="3.33" fill="#ffff00"/><rect x="60.56" y="235.76" width="3.33" height="3.33" fill="#008800"/><rect x="179.11" y="235.76" width="3.33" height="3.33" fill="#8c8c00"/><rect x="69.42" y="236.97" width="3.33" height="3.33" fill="#00ff00"/><rect x="170.24" y="236.97" width="3.33" height="3.33" fill="#00ff00"/><rect x="80.23" y="237.97" width="3.33" height="3.33" fill="#8c8c00"/><rect x="159.44" y="237.97" width="3.33" height="3.33" fill="#008800"/><rect x="92.55" y="238.71" width="3.33" height="3.33" fill="#ffff00"/><rect x="147.11" y="238.71" width="3.33" height="3.33" fill="#0000ff"/><rect x="105.93" y="239.16" width="3.33" height="3.33" fill="#900000"/><rect x="133.74" y="239.16" width="3.33" height="3.33" fill="#000090"/><rect x="119.83" y="239.31" width="3.33" height="3.33" fill="#ff0000"/><rect x="45.36" y="241.55" width="3.37" height="3.37" fill="#000090"/><rect x="46.79" y="243.17" width="3.37" height="3.37" fill="#0000ff"/><rect x="192.85" y="243.17" width="3.37" height="3.37" fill="#ff0000"/><rect x="51.02" y="244.74" width="3.37" height="3.37" fill="#008800"/><rect x="188.61" y="244.74" width="3.37" height="3.37" fill="#900000"/><rect x="57.91" y="246.18" width="3.37" height="3.37" fill="#00ff00"/><rect x="181.73" y="246.18" width="3.37" height="3.37" fill="#ffff00"/><rect x="67.17" y="247.44" width="3.37" height="3.37" fill="#8c8c00"/><rect x="172.47" y="247.44" width="3.37" height="3.37" fill="#8c8c00"/><rect x="78.45" y="248.48" width="3.37" height="3.37" fill="#ffff00"/><rect x="161.18" y="248.48" width="3.37" height="3.37" fill="#00ff00"/><rect x="91.32" y="249.25" width="3.37" height="3.37" fill="#900000"/><rect x="148.31" y="249.25" width="3.37" height="3.37" fill="#008800"/><rect x="105.29" y="249.73" width="3.37" height="3.37" fill="#ff0000"/><rect x="134.34" y="249.73" width="3.37" height="3.37" fill="#0000ff"/><rect x="119.82" y="249.89" width="3.37" height="3.37" fill="#000090"/><rect x="42.17" y="251.77" width="3.40" height="3.40" fill="#0000ff"/><rect x="43.66" y="253.46" width="3.40" height="3.40" fill="#008800"/><rect x="195.94" y="253.46" width="3.40" height="3.40" fill="#000090"/><rect x="48.08" y="255.09" width="3.40" height="3.40" fill="#00ff00"/><rect x="191.52" y="255.09" width="3.40" height="3.40" fill="#ff0000"/><rect x="55.25" y="256.60" width="3.40" height="3.40" fill="#8c8c00"/><rect x="184.35" y="256.60" width="3.40" height="3.40" fill="#900000"/><rect x="64.91" y="257.91" width="3.40" height="3.40" fill="#ffff00"/><rect x="174.69" y="257.91" width="3.40" height="3.40" fill="#ffff00"/><rect x="76.67" y="258.99" width="3.40" height="3.40" fill="#900000"/><rect x="162.93" y="258.99" width="3.40" height="3.40" fill="#8c8c00"/><rect x="90.09" y="259.80" width="3.40" height="3.40" fill="#ff0000"/><rect x="149.51" y="259.80" width="3.40" height="3.40" fill="#00ff00"/><rect x="104.66" y="260.29" width="3.40" height="3.40" fill="#000090"/><rect x="134.94" y="260.29" width="3.40" height="3.40" fill="#008800"/><rect x="119.80" y="260.46" width="3.40" height="3.40" fill="#0000ff"/></g></svg>
<svg class="b" style="left:366px;top:207px;" width="52" height="22" viewBox="0 0 52 22"><path d="M1.2 10.8 L18.6 1.8 V7.5 H50 V14.2 H18.6 V20 Z" fill="#5b9bd5"/></svg>
<div class="b" style="left:415.8px;top:189.9px;width:150.1px;height:55.8px;background:linear-gradient(#71a6db,#5b97d5 50%,#4a89cf);border:1px solid #4a7fbe;"></div>
<span class="t" id="t0" style="left:462.80px;top:206.20px;font-size:17.2px;color:#fff;letter-spacing:-0.210px;">2. View</span>
<span class="t" id="t1" style="left:439.80px;top:229.20px;font-size:17.2px;color:#fff;letter-spacing:0.067px;">Motion Effect</span>
<span class="t r" id="t2" style="left:658.60px;top:44.90px;transform:rotate(90deg);transform-origin:0 50%;margin-top:-0.5em;font-size:8.3px;color:#444;letter-spacing:-0.337px;">Previews</span>
<span class="t r" id="t3" style="left:658.60px;top:90.40px;transform:rotate(90deg);transform-origin:0 50%;margin-top:-0.5em;font-size:8.6px;color:#444;letter-spacing:-0.095px;">Control Lights</span>
<span class="t r" id="t4" style="left:658.60px;top:156.40px;transform:rotate(90deg);transform-origin:0 50%;margin-top:-0.5em;font-size:8.47px;color:#444;letter-spacing:-0.306px;">Effect Samples</span>
<span class="t" id="t5" style="left:21.50px;top:11.30px;font-size:8.59px;color:#000;letter-spacing:-0.305px;">Light-O-Rama S5 Sequencer v5.4.3 Pro</span>
<span class="t" id="t6" style="left:12.20px;top:30.40px;font-size:8.47px;color:#262626;letter-spacing:-0.319px;"><u>F</u>ile</span>
<span class="t" id="t7" style="left:38.00px;top:30.40px;font-size:8.59px;color:#262626;letter-spacing:-0.387px;"><u>S</u>equence</span>
<span class="t" id="t8" style="left:87.50px;top:30.40px;font-size:8.52px;color:#262626;letter-spacing:-0.348px;"><u>T</u>ools</span>
<span class="t" id="t9" style="left:119.80px;top:30.40px;font-size:8.8px;color:#262626;letter-spacing:-0.122px;"><u>W</u>indow</span>
<span class="t" id="t10" style="left:163.70px;top:30.40px;font-size:8.8px;color:#262626;letter-spacing:-0.103px;"><u>H</u>elp</span>
<span class="t" id="t11" style="left:8.80px;top:51.20px;font-size:8.6px;color:#444;letter-spacing:-0.241px;">Light-O-Rama.Spirals on PixelTree-16x25 Folded (40-47)</span>
<span class="t" id="t12" style="left:19.70px;top:393.80px;font-size:8.57px;color:#262626;letter-spacing:-0.314px;">Start Page</span>
<div class="b" style="left:81.7px;top:386.3px;width:140.5px;height:14.2px;background:#007acc;"></div>
<span class="t" id="t13" style="left:90.70px;top:393.80px;font-size:8.47px;color:#fff;letter-spacing:-0.269px;">* SS-Wish Liszt-TransSiberian ...</span>
<svg class="b" style="left:211px;top:389px;" width="9" height="9" viewBox="0 0 9 9"><path d="M1.6 1.6 L6.9 6.9 M6.9 1.6 L1.6 6.9" stroke="#fff" stroke-width="1.1" fill="none"/></svg>
<svg class="b" style="left:637.6px;top:392.4px;" width="8" height="6" viewBox="0 0 8 6"><path d="M1 1.5 H7 L4 4.6 Z" fill="#5a5a5a"/></svg>
<div class="b" style="left:5px;top:400px;width:644px;height:187px;background:#f0f0f4;border:1px solid #cfd0dc;border-top:none;"></div>
<div class="b" style="left:5px;top:400px;width:644px;height:1px;background:#007acc;"></div>
<div class="b" style="left:5px;top:401px;width:644px;height:1px;background:rgba(0,122,204,0.35);"></div>
<div class="b" style="left:6px;top:401.6px;width:642px;height:17px;background:#f1f1f5;"></div>
<svg class="b" style="left:6.5px;top:402.1px;" width="13" height="13" viewBox="0 0 13 13"><circle cx="6.2" cy="6.2" r="5.6" fill="#2fa32f" stroke="#9bd89b" stroke-width="1"/><path d="M3.4 6.4 L5.5 8.6 L9.2 4" stroke="#fff" stroke-width="1.6" fill="none"/></svg>
<span class="t" id="t14" style="left:25.00px;top:408.80px;font-size:8.8px;color:#262626;letter-spacing:0.044px;">Timing</span>
<svg class="b" style="left:54.6px;top:406.4px;" width="6" height="5" viewBox="0 0 6 5"><path d="M0.9 1 H5.1 L3 3.6 Z" fill="#222"/></svg>
<div class="b" style="left:62.3px;top:402px;width:15.3px;height:14.2px;background:#e8f0fa;border:1px solid #8ab8ec;"></div>
<svg class="b" style="left:65px;top:403px;" width="10" height="13" viewBox="0 0 10 13"><path d="M2.8 6 V3.8 Q2.8 1.4 5 1.4 Q7.2 1.4 7.2 3.8 V6" stroke="#a6a6a6" stroke-width="1.3" fill="none"/><rect x="1.2" y="5.6" width="7.6" height="6" fill="#a8a8a8"/></svg>
<div class="b" style="left:78.5px;top:402px;width:90px;height:14.6px;background:#f4f4f8;"></div>
<span class="t" id="t15" style="left:82.00px;top:408.80px;font-size:8.37px;color:#262626;letter-spacing:-0.301px;">Fixed 0.5</span>
<svg class="b" style="left:161px;top:406.4px;" width="6" height="5" viewBox="0 0 6 5"><path d="M0.9 1 H5.1 L3 3.6 Z" fill="#222"/></svg>
<span class="t" id="t16" style="left:172.80px;top:408.80px;font-size:8.7px;color:#262626;letter-spacing:-0.209px;">Imported from SS-Wish Liszt-TransSiberian Orchestra-2020.loredit on 6/7/2020</span>
<div class="b" style="left:6px;top:419px;width:633px;height:32.2px;background:linear-gradient(#f5f5fa,#eeeef4 45%,#e0e0eb);"></div>
<div class="b" style="left:53.4px;top:420.4px;width:1px;height:30px;background:#85858f;"></div>
<div class="b" style="left:54.4px;top:420.4px;width:1px;height:30px;background:#fbfbfd;"></div>
<div class="b" style="left:131.6px;top:420.4px;width:1px;height:30px;background:#85858f;"></div>
<div class="b" style="left:132.6px;top:420.4px;width:1px;height:30px;background:#fbfbfd;"></div>
<div class="b" style="left:281px;top:420.4px;width:1px;height:30px;background:#85858f;"></div>
<div class="b" style="left:282px;top:420.4px;width:1px;height:30px;background:#fbfbfd;"></div>
<div class="b" style="left:457.2px;top:420.4px;width:1px;height:30px;background:#85858f;"></div>
<div class="b" style="left:458.2px;top:420.4px;width:1px;height:30px;background:#fbfbfd;"></div>
<div class="b" style="left:535.6px;top:420.4px;width:1px;height:30px;background:#85858f;"></div>
<div class="b" style="left:536.6px;top:420.4px;width:1px;height:30px;background:#fbfbfd;"></div>
<div class="b" style="left:599.6px;top:420.4px;width:1px;height:30px;background:#85858f;"></div>
<div class="b" style="left:600.6px;top:420.4px;width:1px;height:30px;background:#fbfbfd;"></div>
<div class="b" style="left:637.2px;top:420.4px;width:1px;height:30px;background:#85858f;"></div>
<div class="b" style="left:638.2px;top:420.4px;width:1px;height:30px;background:#fbfbfd;"></div>
<svg class="b" style="left:11px;top:424.4px;" width="11" height="11" viewBox="0 0 11 11"><rect x="0.5" y="0.5" width="9.8" height="9.8" fill="#2658d8" stroke="#12308c" stroke-width="0.8"/><rect x="2.3" y="0.9" width="6.2" height="3.8" fill="#eef3ff"/><rect x="2.8" y="6.4" width="5.2" height="3.6" fill="#12247a"/><rect x="3.6" y="7.1" width="1.5" height="2.4" fill="#dfe6ff"/></svg>
<svg class="b" style="left:25.4px;top:424.6px;" width="11" height="11" viewBox="0 0 11 11"><path d="M0.5 3.9 L4.3 0.6 V2.6 H6.2 Q9.6 2.6 9.6 6.2 V9.6 H7 V6.6 Q7 5.2 5.8 5.2 H4.3 V7.2 Z" stroke="#0c6a14" stroke-width="0.7" stroke-linejoin="round" fill="#22b430"/></svg>
<svg class="b" style="left:40.6px;top:424.6px;" width="11" height="11" viewBox="0 0 11 11"><path d="M10.1 3.9 L6.3 0.6 V2.6 H4.4 Q1 2.6 1 6.2 V9.6 H3.6 V6.6 Q3.6 5.2 4.8 5.2 H6.3 V7.2 Z" stroke="#0c6a14" stroke-width="0.7" stroke-linejoin="round" fill="#22b430"/></svg>
<svg class="b" style="left:60.4px;top:424.2px;" width="9" height="12" viewBox="0 0 9 12"><path d="M2 0.6 L5.6 7.4 M6.4 0.6 L2.8 7.4" stroke="#5a6a8a" stroke-width="1.1" fill="none"/><circle cx="2.3" cy="9" r="1.5" stroke="#2a50d0" stroke-width="1.1" fill="none"/><circle cx="6.1" cy="9" r="1.5" stroke="#2a50d0" stroke-width="1.1" fill="none"/></svg>
<svg class="b" style="left:73.6px;top:424.8px;" width="12" height="11" viewBox="0 0 12 11"><rect x="0.6" y="0.6" width="6" height="7" fill="#f2f6ff" stroke="#7a96d0" stroke-width="0.8"/><path d="M1.8 2.4 H5.4 M1.8 4 H5.4" stroke="#9ab4ea" stroke-width="0.7"/><rect x="4.4" y="2.6" width="6.2" height="7.2" fill="#dfe9ff" stroke="#3e60b4" stroke-width="0.8"/><path d="M5.6 4.6 H9.4 M5.6 6.2 H9.4 M5.6 7.8 H9.4" stroke="#5f86dc" stroke-width="0.7"/></svg>
<svg class="b" style="left:88.4px;top:423.4px;" width="13" height="13" viewBox="0 0 13 13"><rect x="0.6" y="1.6" width="9.6" height="10" rx="1" fill="#c8985a" stroke="#8a6632" stroke-width="0.8"/><rect x="1.8" y="3" width="7.2" height="7.6" fill="#d8b078"/><rect x="3.2" y="0.5" width="4.4" height="2.4" fill="#8e8e8e" stroke="#5a5a5a" stroke-width="0.6"/><rect x="4.8" y="5.2" width="6.2" height="6.6" fill="#ececec" stroke="#8a8a8a" stroke-width="0.8"/><path d="M6 7.2 H9.8 M6 8.6 H9.8 M6 10 H9.8" stroke="#b0b0b0" stroke-width="0.6"/></svg>
<svg class="b" style="left:102.8px;top:423.4px;" width="13" height="13" viewBox="0 0 13 13"><rect x="0.6" y="1.6" width="9.6" height="10" rx="1" fill="#c8985a" stroke="#8a6632" stroke-width="0.8"/><rect x="1.8" y="3" width="7.2" height="7.6" fill="#d8b078"/><rect x="3.2" y="0.5" width="4.4" height="2.4" fill="#8e8e8e" stroke="#5a5a5a" stroke-width="0.6"/><path d="M8 4.6 L9 7.2 L11.8 7.3 L9.6 9 L10.4 11.7 L8 10.2 L5.6 11.7 L6.4 9 L4.2 7.3 L7 7.2 Z" fill="#ffe23a" stroke="#c89a00" stroke-width="0.5"/></svg>
<svg class="b" style="left:118px;top:424px;" width="13" height="13" viewBox="0 0 13 13"><circle cx="6.2" cy="6.8" r="4" stroke="#0a6612" stroke-width="3" fill="none"/><circle cx="6.2" cy="6.8" r="4" stroke="#34d044" stroke-width="1.2" fill="none"/><path d="M1 0.4 L6.6 1.4 L2.8 5.4 Z" fill="#0a6612"/><path d="M2.2 1.6 L5 2.1 L3 4.2 Z" fill="#34d044"/></svg>
<span class="t" id="t17" style="left:75.20px;top:445.20px;font-size:8.7px;color:#262626;letter-spacing:-0.173px;">Clipboard</span>
<svg class="b" style="left:136.8px;top:423.4px;" width="13" height="13" viewBox="0 0 13 13"><path d="M5.6 6.4 V3.8 Q5.6 1.4 8 1.4 Q10.4 1.4 10.4 3.8 V4.8" stroke="#1a8a2a" stroke-width="1.4" fill="none"/><rect x="0.8" y="6" width="8" height="6" fill="#22a032" stroke="#0a5a14" stroke-width="0.7"/><rect x="1.6" y="6.8" width="6.4" height="1.4" fill="#4cc45c"/></svg>
<span class="t" id="t18" style="left:152.20px;top:429.60px;font-size:8.79px;color:#262626;letter-spacing:-0.310px;">Std Clipboard</span>
<div class="b" style="left:208.3px;top:423.4px;width:70.3px;height:13.2px;background:#fff;border:1px solid #dcdce6;"></div>
<span class="t" id="t19" style="left:210.40px;top:429.90px;font-size:8.28px;color:#262626;letter-spacing:-0.311px;">Paste By Time</span>
<svg class="b" style="left:270px;top:427.5px;" width="6" height="5" viewBox="0 0 6 5"><path d="M0.9 1.2 H5.1 L3 3.7 Z" fill="#444"/></svg>
<span class="t" id="t20" style="left:185.50px;top:445.20px;font-size:8.69px;color:#262626;letter-spacing:-0.360px;">Paste Mode</span>
<svg class="b" style="left:288px;top:423.2px;" width="12" height="13" viewBox="0 0 12 13"><path d="M0.8 0.7 L9.8 5.3 L0.8 9.9 Z" fill="#16b816" stroke="#0b7a0b" stroke-width="0.9" stroke-linejoin="round"/><path d="M1.8 2.6 L6.4 5.1 L1.8 6 Z" fill="#3fd43f"/></svg>
<svg class="b" style="left:301.3px;top:423.2px;" width="12" height="13" viewBox="0 0 12 13"><path d="M2.2 1 L10 4.6 L2.2 8.1 Z" fill="#16b816" stroke="#0b7a0b" stroke-width="0.9" stroke-linejoin="round"/><path d="M3 2.8 L6.6 4.5 L3 5.2 Z" fill="#3fd43f"/><path d="M0.7 7.8 V11.2 M0.7 9.5 H10.4 M10.4 8.2 V10.8" stroke="#2a44f4" stroke-width="1.1" fill="none"/></svg>
<svg class="b" style="left:316px;top:423.2px;" width="12" height="13" viewBox="0 0 12 13"><path d="M2.2 1 L10 4.6 L2.2 8.1 Z" fill="#16b816" stroke="#0b7a0b" stroke-width="0.9" stroke-linejoin="round"/><path d="M3 2.8 L6.6 4.5 L3 5.2 Z" fill="#3fd43f"/><path d="M0.4 9.5 H10.4 M10.4 7.8 V11.2" stroke="#2a44f4" stroke-width="1.1" fill="none"/></svg>
<svg class="b" style="left:331px;top:423.2px;" width="12" height="13" viewBox="0 0 12 13"><path d="M2.2 1 L10 4.6 L2.2 8.1 Z" fill="#16b816" stroke="#0b7a0b" stroke-width="0.9" stroke-linejoin="round"/><path d="M3 2.8 L6.6 4.5 L3 5.2 Z" fill="#3fd43f"/><path d="M0.7 7.9 V11.5 M0.7 9.8 H10.4 M10.4 7.9 V11.5" stroke="#2a44f4" stroke-width="1.1" fill="none"/></svg>
<svg class="b" style="left:345.8px;top:423.2px;" width="12" height="13" viewBox="0 0 12 13"><path d="M2.2 1 L10 4.6 L2.2 8.1 Z" fill="#16b816" stroke="#0b7a0b" stroke-width="0.9" stroke-linejoin="round"/><path d="M3 2.8 L6.6 4.5 L3 5.2 Z" fill="#3fd43f"/><rect x="0.6" y="8.3" width="9.8" height="2.6" fill="#8fa4ff" stroke="#2a44f4" stroke-width="0.9"/></svg>
<svg class="b" style="left:361.2px;top:424.2px;" width="10" height="12" viewBox="0 0 10 12"><rect x="0.5" y="1.5" width="2.8" height="8" fill="#bcbcbc" stroke="#a4a4a4" stroke-width="0.7"/><rect x="5.1" y="1.5" width="2.8" height="8" fill="#bcbcbc" stroke="#a4a4a4" stroke-width="0.7"/></svg>
<svg class="b" style="left:375.8px;top:424.2px;" width="11" height="11" viewBox="0 0 11 11"><rect x="0.6" y="0.6" width="8.6" height="8.6" fill="#cf3434" stroke="#9a2020" stroke-width="0.9"/><rect x="1.8" y="1.8" width="6.2" height="6.2" fill="#e66262"/></svg>
<div class="b" style="left:388.2px;top:422.6px;width:12.6px;height:13.6px;background:#cbdff8;border-radius:2.5px;"></div>
<svg class="b" style="left:389.2px;top:423px;" width="11" height="13" viewBox="0 0 11 13"><ellipse cx="3.4" cy="6.6" rx="2.3" ry="2.6" stroke="#2a3cf0" stroke-width="1.3" fill="none"/><ellipse cx="7.4" cy="6.6" rx="2.3" ry="2.6" stroke="#2a3cf0" stroke-width="1.3" fill="none"/><path d="M7.2 1.6 L3.8 11.6" stroke="#e01818" stroke-width="1.3"/></svg>
<div class="b" style="left:402.5px;top:423.4px;width:53.3px;height:13.2px;background:#fff;border:1px solid #dcdce6;"></div>
<span class="t" id="t21" style="left:404.20px;top:429.90px;font-size:8.7px;color:#262626;letter-spacing:-0.240px;">Normal</span>
<svg class="b" style="left:447px;top:427.5px;" width="6" height="5" viewBox="0 0 6 5"><path d="M0.9 1.2 H5.1 L3 3.7 Z" fill="#444"/></svg>
<span class="t" id="t22" style="left:361.90px;top:445.20px;font-size:8.13px;color:#262626;letter-spacing:-0.369px;">Play</span>
<svg class="b" style="left:461.2px;top:423.7px;" width="18" height="12" viewBox="0 0 18 12"><path d="M4.4 1.2 H10.2 L7.9 5.8 L10.2 10.4 H4.4 L6.7 5.8 Z" fill="#f4f4f4" stroke="#2a2a2a" stroke-width="0.7"/><path d="M5.2 9.9 H9.4 L7.3 6.4 Z" fill="#9a1616"/><path d="M6 2.6 H8.6 L7.3 4.8 Z" fill="#c04a4a"/><path d="M3.9 1.1 H10.7 M3.9 10.5 H10.7" stroke="#1a1a1a" stroke-width="1.1"/><path d="M4.0 3 L1.4 5.8 L4.0 8.6" stroke="#3a3a3a" stroke-width="0.8" fill="none"/><path d="M13.0 3 L10.4 5.8 L13.0 8.6" stroke="#3a3a3a" stroke-width="0.8" fill="none"/></svg>
<svg class="b" style="left:476px;top:423.7px;" width="18" height="12" viewBox="0 0 18 12"><path d="M4.4 1.2 H10.2 L7.9 5.8 L10.2 10.4 H4.4 L6.7 5.8 Z" fill="#f4f4f4" stroke="#2a2a2a" stroke-width="0.7"/><path d="M5.2 9.9 H9.4 L7.3 6.4 Z" fill="#9a1616"/><path d="M6 2.6 H8.6 L7.3 4.8 Z" fill="#c04a4a"/><path d="M3.9 1.1 H10.7 M3.9 10.5 H10.7" stroke="#1a1a1a" stroke-width="1.1"/><path d="M1.4 3 L4.0 5.8 L1.4 8.6" stroke="#3a3a3a" stroke-width="0.8" fill="none"/><path d="M10.4 3 L13.0 5.8 L10.4 8.6" stroke="#3a3a3a" stroke-width="0.8" fill="none"/></svg>
<svg class="b" style="left:489.2px;top:423.7px;" width="18" height="12" viewBox="0 0 18 12"><path d="M4.4 1.2 H10.2 L7.9 5.8 L10.2 10.4 H4.4 L6.7 5.8 Z" fill="#f4f4f4" stroke="#2a2a2a" stroke-width="0.7"/><path d="M5.2 9.9 H9.4 L7.3 6.4 Z" fill="#9a1616"/><path d="M6 2.6 H8.6 L7.3 4.8 Z" fill="#c04a4a"/><path d="M3.9 1.1 H10.7 M3.9 10.5 H10.7" stroke="#1a1a1a" stroke-width="1.1"/><path d="M14.0 3 L11.4 5.8 L14.0 8.6" stroke="#3a3a3a" stroke-width="0.8" fill="none"/></svg>
<svg class="b" style="left:504.1px;top:423.7px;" width="18" height="12" viewBox="0 0 18 12"><path d="M4.4 1.2 H10.2 L7.9 5.8 L10.2 10.4 H4.4 L6.7 5.8 Z" fill="#f4f4f4" stroke="#2a2a2a" stroke-width="0.7"/><path d="M5.2 9.9 H9.4 L7.3 6.4 Z" fill="#9a1616"/><path d="M6 2.6 H8.6 L7.3 4.8 Z" fill="#c04a4a"/><path d="M3.9 1.1 H10.7 M3.9 10.5 H10.7" stroke="#1a1a1a" stroke-width="1.1"/><path d="M11.1 3 L13.7 5.8 L11.1 8.6" stroke="#3a3a3a" stroke-width="0.8" fill="none"/></svg>
<svg class="b" style="left:521.8px;top:423.4px;" width="12" height="12" viewBox="0 0 12 12"><rect x="4.2" y="0.5" width="3.2" height="11" fill="#f01010"/><path d="M4 3.4 L0.8 6 L4 8.6 Z" fill="#1a2a4a"/><path d="M7.6 3.4 L10.8 6 L7.6 8.6 Z" fill="#1a2a4a"/></svg>
<span class="t" id="t23" style="left:484.50px;top:445.20px;font-size:8.7px;color:#262626;letter-spacing:-0.302px;">Nudge</span>
<svg class="b" style="left:540.4px;top:424px;" width="12" height="12" viewBox="0 0 12 12"><path d="M2.4 0.6 H9.2 L5.8 4.4 Z M2.4 11 H9.2 L5.8 7.2 Z" fill="#a4cef6" stroke="#5f86b8" stroke-width="0.6"/><rect x="0.5" y="4.4" width="10.6" height="2.8" fill="#fbfbfb" stroke="#7e7e7e" stroke-width="0.7"/></svg>
<svg class="b" style="left:555.2px;top:424px;" width="12" height="12" viewBox="0 0 12 12"><path d="M2 4.4 H9.6 L5.8 0.5 Z M2 7.2 H9.6 L5.8 11.1 Z" fill="#a4cef6" stroke="#5f86b8" stroke-width="0.6"/><rect x="0.5" y="4.4" width="10.6" height="2.8" fill="#fbfbfb" stroke="#7e7e7e" stroke-width="0.7"/></svg>
<svg class="b" style="left:570.4px;top:424px;" width="12" height="12" viewBox="0 0 12 12"><path d="M0.6 2 V9.6 L4.4 5.8 Z M11 2 V9.6 L7.2 5.8 Z" fill="#22d246" stroke="#0a8a26" stroke-width="0.6"/><rect x="4.4" y="0.5" width="2.8" height="10.8" fill="#ececec" stroke="#7e7e7e" stroke-width="0.7"/></svg>
<svg class="b" style="left:585.3px;top:424px;" width="12" height="12" viewBox="0 0 12 12"><path d="M4.4 1.8 V9.8 L0.5 5.8 Z M7.2 1.8 V9.8 L11.1 5.8 Z" fill="#22d246" stroke="#0a8a26" stroke-width="0.6"/><rect x="4.4" y="0.5" width="2.8" height="10.8" fill="#ececec" stroke="#7e7e7e" stroke-width="0.7"/></svg>
<span class="t" id="t24" style="left:556.50px;top:445.20px;font-size:8.7px;color:#262626;letter-spacing:-0.340px;">Zoom</span>
<svg class="b" style="left:607.4px;top:423.7px;" width="10" height="12" viewBox="0 0 10 12"><rect x="0.6" y="0.4" width="8" height="11.4" fill="#3c3c3c"/><path d="M2 2.2 H7.2 M2 4.3 H7.2 M2 6.4 H7.2 M2 8.5 H7.2 M2 10.4 H7.2" stroke="#a8a8a8" stroke-width="0.9"/></svg>
<svg class="b" style="left:621px;top:424px;" width="12" height="12" viewBox="0 0 12 12"><rect x="0.5" y="0.5" width="10.4" height="10.4" fill="#f6f8f6" stroke="#c4c8c4" stroke-width="0.7"/><path d="M2 10 V5.4 H3.6 L6.6 1.6 L8.4 4 V2.6 H9.4 V10 Z" fill="#169a1e"/><rect x="4.4" y="6.2" width="2" height="2" fill="#d8f4d8"/></svg>
<span class="t" id="t25" style="left:603.00px;top:445.20px;font-size:8.7px;color:#262626;letter-spacing:-0.070px;">Visibility</span>
<div class="b" style="left:8.1px;top:455.6px;width:116.30000000000001px;height:31.2px;background:#f3f3f7;border:1px solid #c6c7d2;"></div>
<div class="b" style="left:9.1px;top:466.6px;width:114.30000000000001px;height:1px;background:#d2d3de;"></div>
<span class="t" id="t26" style="left:42.40px;top:461.90px;font-size:8.7px;color:#262626;letter-spacing:-0.170px;">Select Action</span>
<div class="b" style="left:129.6px;top:455.6px;width:84.80000000000001px;height:31.2px;background:#f3f3f7;border:1px solid #c6c7d2;"></div>
<div class="b" style="left:130.6px;top:466.6px;width:82.80000000000001px;height:1px;background:#d2d3de;"></div>
<span class="t" id="t27" style="left:159.80px;top:461.90px;font-size:8.47px;color:#262626;letter-spacing:-0.437px;">Range</span>
<div class="b" style="left:219.5px;top:455.6px;width:86.80000000000001px;height:31.2px;background:#f3f3f7;border:1px solid #c6c7d2;"></div>
<div class="b" style="left:220.5px;top:466.6px;width:84.80000000000001px;height:1px;background:#d2d3de;"></div>
<span class="t" id="t28" style="left:252.00px;top:461.90px;font-size:8.54px;color:#262626;letter-spacing:-0.382px;">Slope</span>
<div class="b" style="left:311.4px;top:455.6px;width:66.5px;height:31.2px;background:#f3f3f7;border:1px solid #c6c7d2;"></div>
<div class="b" style="left:312.4px;top:466.6px;width:64.5px;height:1px;background:#d2d3de;"></div>
<span class="t" id="t29" style="left:335.50px;top:461.90px;font-size:8.7px;color:#262626;letter-spacing:-0.281px;">Type</span>
<div class="b" style="left:383px;top:455.6px;width:66.5px;height:31.2px;background:#f3f3f7;border:1px solid #c6c7d2;"></div>
<div class="b" style="left:384px;top:466.6px;width:64.5px;height:1px;background:#d2d3de;"></div>
<span class="t" id="t30" style="left:405.50px;top:461.90px;font-size:8.7px;color:#262626;letter-spacing:-0.013px;">Effect</span>
<div class="b" style="left:12px;top:467.9px;width:22.4px;height:14.2px;background:#e4eefb;border:1px solid #74a8e8;border-radius:1.5px;"></div>
<svg class="b" style="left:14px;top:470px;" width="12" height="12" viewBox="0 0 12 12"><path d="M1.2 10.8 L7 5" stroke="#0a4aa0" stroke-width="3.4"/><path d="M1.2 10.8 L7 5" stroke="#3aa0f0" stroke-width="1.8"/><path d="M4 1 H11 V8 Z" fill="#3aa0f0" stroke="#0a4aa0" stroke-width="0.9"/></svg>
<svg class="b" style="left:28.5px;top:474px;" width="5" height="4" viewBox="0 0 5 4"><path d="M0.4 0.6 H4.6 L2.5 3.2 Z" fill="#222"/></svg>
<svg class="b" style="left:36px;top:470px;" width="12" height="12" viewBox="0 0 12 12"><rect x="0.5" y="0.5" width="10.6" height="10.6" fill="#fff" stroke="#111" stroke-width="1"/><path d="M0.5 0.5 H11 L0.5 7 Z" fill="#111"/><path d="M0.5 11 H11 V5 Z" fill="#111"/></svg>
<svg class="b" style="left:52.3px;top:470px;" width="12" height="12" viewBox="0 0 12 12"><rect x="0.6" y="0.6" width="7.2" height="7.2" fill="#3a5eae" stroke="#16264e" stroke-width="1"/><rect x="3.2" y="3.2" width="7.2" height="7.2" fill="#5f86d4" stroke="#16264e" stroke-width="1"/></svg>
<svg class="b" style="left:68px;top:469.6px;" width="12" height="13" viewBox="0 0 12 13"><rect x="0.5" y="0.5" width="4" height="10.8" fill="#f2d61c" stroke="#5a4a00" stroke-width="0.8"/><rect x="6.4" y="0.5" width="4" height="10.8" fill="#e0209a" stroke="#60003a" stroke-width="0.8"/><path d="M5.5 3 V9" stroke="#0c6a0c" stroke-width="1"/><circle cx="5.5" cy="3.2" r="1.7" fill="#22c022" stroke="#0c6a0c" stroke-width="0.6"/><circle cx="5.5" cy="8.6" r="1.7" fill="#22c022" stroke="#0c6a0c" stroke-width="0.6"/></svg>
<svg class="b" style="left:84px;top:470px;" width="13" height="12" viewBox="0 0 13 12"><path d="M1 3.4 L4.4 0.8 L8.6 3 L5.2 5.8 Z" fill="#f8d820" stroke="#b05000" stroke-width="0.8"/><path d="M3 6.4 L6.4 3.8 L10.6 6 L7.2 8.8 Z" fill="#f89020" stroke="#b03000" stroke-width="0.8"/><path d="M5 9.2 L8.4 6.6 L12.4 8.8 L9 11.6 Z" fill="#f04020" stroke="#901000" stroke-width="0.8"/></svg>
<svg class="b" style="left:99.3px;top:474px;" width="5" height="4" viewBox="0 0 5 4"><path d="M0.4 0.6 H4.6 L2.5 3.2 Z" fill="#222"/></svg>
<svg class="b" style="left:106.3px;top:470px;" width="13" height="12" viewBox="0 0 13 12"><rect x="3.6" y="3.4" width="8" height="8" fill="#e8e8e8" stroke="#333" stroke-width="0.9"/><rect x="0.6" y="0.6" width="8" height="7.6" fill="#28c8d8" stroke="#0a5a7a" stroke-width="0.9"/></svg>
<div class="b" style="left:133.2px;top:468.7px;width:27.80000000000001px;height:15px;background:#f3f3f7;border:1px solid #d0d1da;"></div>
<span class="t" id="t31" style="left:134.80px;top:475.60px;font-size:8.11px;color:#2a2a3a;letter-spacing:-0.316px;">0</span>
<div class="b" style="left:150.8px;top:469.6px;width:9.4px;height:6.7px;background:#ededf0;border:1px solid #d0d0d6;"></div>
<div class="b" style="left:150.8px;top:476.2px;width:9.4px;height:6.7px;background:#ededf0;border:1px solid #d0d0d6;"></div>
<svg class="b" style="left:152.5px;top:470.6px;" width="6" height="12" viewBox="0 0 6 12"><path d="M0.6 4 H5.4 L3 1.4 Z M0.6 8 H5.4 L3 10.6 Z" fill="#111"/></svg>
<div class="b" style="left:162.3px;top:468.7px;width:28.19999999999999px;height:15px;background:#f3f3f7;border:1px solid #d0d1da;"></div>
<span class="t" id="t32" style="left:163.80px;top:475.60px;font-size:7.65px;color:#2a2a3a;letter-spacing:-0.634px;">100</span>
<div class="b" style="left:180.3px;top:469.6px;width:9.4px;height:6.7px;background:#ededf0;border:1px solid #d0d0d6;"></div>
<div class="b" style="left:180.3px;top:476.2px;width:9.4px;height:6.7px;background:#ededf0;border:1px solid #d0d0d6;"></div>
<svg class="b" style="left:182.0px;top:470.6px;" width="6" height="12" viewBox="0 0 6 12"><path d="M0.6 4 H5.4 L3 1.4 Z M0.6 8 H5.4 L3 10.6 Z" fill="#111"/></svg>
<svg class="b" style="left:193px;top:469.6px;" width="12" height="13" viewBox="0 0 12 13"><rect x="0.5" y="7.4" width="2.8" height="3.6" fill="#22c02a" stroke="#111" stroke-width="0.7"/><rect x="3.4" y="5.2" width="2.8" height="5.8" fill="#22c02a" stroke="#111" stroke-width="0.7"/><rect x="6.3" y="2.2" width="2.8" height="8.8" fill="#22c02a" stroke="#111" stroke-width="0.7"/><path d="M7.4 5 Q7.4 3.2 9 3.2 Q10.6 3.4 10.4 5 Q10.2 6 9.2 6.8 V8" stroke="#fff" stroke-width="2" fill="none"/><path d="M7.4 5 Q7.4 3.2 9 3.2 Q10.6 3.4 10.4 5 Q10.2 6 9.2 6.8 V8 M9.2 9.4 V10.8" stroke="#111" stroke-width="1" fill="none"/></svg>
<svg class="b" style="left:204.4px;top:473.6px;" width="5" height="4" viewBox="0 0 5 4"><path d="M0.4 0.6 H4.6 L2.5 3.2 Z" fill="#222"/></svg>
<div class="b" style="left:222.8px;top:467.8px;width:15.2px;height:14.4px;background:#e4eefb;border:1px solid #74a8e8;border-radius:1.5px;"></div>
<svg class="b" style="left:224.6px;top:470px;" width="11" height="11" viewBox="0 0 11 11"><rect x="0.9" y="0.9" width="9.2" height="9.2" fill="#fdfdfd" stroke="#4a4a4a" stroke-width="1.6"/><rect x="2" y="2" width="7" height="7" fill="none" stroke="#c8c8c8" stroke-width="0.8"/></svg>
<svg class="b" style="left:240.4px;top:470px;" width="11" height="11" viewBox="0 0 11 11"><rect x="0.9" y="0.9" width="9.2" height="9.2" fill="#050505" stroke="#6a6a6a" stroke-width="1.5"/></svg>
<svg class="b" style="left:255.8px;top:469px;" width="12" height="12" viewBox="0 0 12 12"><path d="M0.8 11.2 V7 L10.6 2.2 V11.2 Z" fill="#1fa630" stroke="#0a5a12" stroke-width="0.8" stroke-linejoin="round"/><path d="M4.6 8.6 V2.6 M2.3999999999999995 4.4 L4.6 1.6 L6.8 4.4" stroke="#fff" stroke-width="2.8" fill="none" stroke-linejoin="round"/><path d="M4.6 8.6 V2.6 M2.3999999999999995 4.4 L4.6 1.6 L6.8 4.4" stroke="#2a76e8" stroke-width="1.5" fill="none"/></svg>
<svg class="b" style="left:271.8px;top:469px;" width="12" height="12" viewBox="0 0 12 12"><path d="M0.8 11.2 V2.2 L10.6 7 V11.2 Z" fill="#1fa630" stroke="#0a5a12" stroke-width="0.8" stroke-linejoin="round"/><path d="M6.8 1.8 V7.8 M4.6 6 L6.8 8.8 L9.0 6" stroke="#fff" stroke-width="2.8" fill="none" stroke-linejoin="round"/><path d="M6.8 1.8 V7.8 M4.6 6 L6.8 8.8 L9.0 6" stroke="#2a76e8" stroke-width="1.5" fill="none"/></svg>
<svg class="b" style="left:287.8px;top:469px;" width="12" height="12" viewBox="0 0 12 12"><path d="M0.8 11.2 V2.6 L5.7 7 L10.6 2.6 V11.2 Z" fill="#1fa630" stroke="#0a5a12" stroke-width="0.8" stroke-linejoin="round"/><path d="M3.4 8.6 V2.6 M1.1999999999999997 4.4 L3.4 1.6 L5.6 4.4" stroke="#fff" stroke-width="2.5" fill="none" stroke-linejoin="round"/><path d="M3.4 8.6 V2.6 M1.1999999999999997 4.4 L3.4 1.6 L5.6 4.4" stroke="#2a76e8" stroke-width="1.2" fill="none"/><path d="M8 1.8 V7.8 M5.8 6 L8 8.8 L10.2 6" stroke="#fff" stroke-width="2.5" fill="none" stroke-linejoin="round"/><path d="M8 1.8 V7.8 M5.8 6 L8 8.8 L10.2 6" stroke="#2a76e8" stroke-width="1.2" fill="none"/></svg>
<div class="b" style="left:312.6px;top:467.8px;width:16.2px;height:14.4px;background:#e4eefb;border:1px solid #74a8e8;border-radius:1.5px;"></div>
<svg class="b" style="left:314.4px;top:469.4px;" width="13" height="12" viewBox="0 0 13 12"><path d="M3.6 0.8 Q0.6 1 0.8 4.4 Q1 6.4 2.4 7.4 V10.6 H5.2 V7.4 Q6.8 6.2 6.8 4 Q6.6 0.8 3.6 0.8 Z" fill="#fbd24a" stroke="#c08a1a" stroke-width="0.7"/><rect x="2.4" y="9" width="2.8" height="2.2" fill="#e8a030"/><path d="M7 3 L11 8.6 M10.6 2.4 L7.4 9" stroke="#3a4ad8" stroke-width="0.9"/><circle cx="10.8" cy="8.6" r="1.3" fill="#2a3ad0"/><circle cx="10.4" cy="2.6" r="1.1" fill="#2a3ad0"/><circle cx="7.6" cy="5.8" r="1.1" fill="#2a3ad0"/></svg>
<svg class="b" style="left:329.8px;top:469.4px;" width="12" height="12" viewBox="0 0 12 12"><defs><linearGradient id="tg2" x1="0" y1="0" x2="1" y2="0.6"><stop offset="0" stop-color="#f6ea20"/><stop offset="0.55" stop-color="#f8a040"/><stop offset="1" stop-color="#f040a8"/></linearGradient></defs><rect x="0.6" y="1.8" width="10.4" height="8" fill="url(#tg2)" stroke="#3a2a10" stroke-width="0.8"/><path d="M0.4 2.6 L3 0.6 V1.8 H5.4 V3.4 H3 V4.6 Z" fill="#18b828" stroke="#0a5a10" stroke-width="0.4"/><path d="M6 9 L8.6 7 V8.2 H11 V9.8 H8.6 V11 Z" fill="#18b828" stroke="#0a5a10" stroke-width="0.4"/></svg>
<div class="b" style="left:6.5px;top:520.3px;width:186.5px;height:14.4px;background:#f7f7fb;"></div>
<span class="t" id="t33" style="left:9.40px;top:527.50px;font-size:8.22px;color:#262626;letter-spacing:-0.316px;">Track 1</span>
<svg class="b" style="left:186px;top:525.5px;" width="6" height="5" viewBox="0 0 6 5"><path d="M0.9 1.2 H5.1 L3 3.7 Z" fill="#222"/></svg>
<svg class="b" style="left:196px;top:521.8px;" width="8" height="11" viewBox="0 0 8 11"><rect x="0.4" y="0.4" width="3" height="3" fill="#0a0a0a"/><rect x="3.6" y="3.8" width="3.2" height="3.2" fill="#0a0a0a"/><rect x="3.6" y="7.4" width="3.2" height="3.2" fill="#0a0a0a"/><path d="M1.9 3.4 V9 H4 M1.9 5.4 H4" stroke="#0a0a0a" stroke-width="0.8" fill="none"/></svg>
<svg class="b" style="left:207.3px;top:525.5px;" width="6" height="5" viewBox="0 0 6 5"><path d="M0.9 1.2 H5.1 L3 3.7 Z" fill="#222"/></svg>
<div class="b" style="left:6.5px;top:534.8px;width:209px;height:39.4px;background:#f0f0f4;"></div>
<div class="b" style="left:6.5px;top:547.2px;width:209px;height:1px;background:#d8d9e3;"></div>
<div class="b" style="left:6.5px;top:559.2px;width:209px;height:1px;background:#d8d9e3;"></div>
<svg class="b" style="left:10px;top:538.6px;" width="7" height="7" viewBox="0 0 7 7"><rect x="0.5" y="0.5" width="6" height="6" fill="#f8f8f8" stroke="#9a9aa6" stroke-width="0.8"/><path d="M1.8 3.5 H5.2" stroke="#444" stroke-width="0.8"/></svg>
<svg class="b" style="left:23.6px;top:538.6px;" width="7" height="7" viewBox="0 0 7 7"><rect x="0.5" y="0.5" width="6" height="6" fill="#f8f8f8" stroke="#9a9aa6" stroke-width="0.8"/><path d="M1.8 3.5 H5.2" stroke="#444" stroke-width="0.8"/></svg>
<span class="t" id="t34" style="left:52.70px;top:542.90px;font-size:8.24px;color:#262626;letter-spacing:-0.267px;">Δ PixelTree-16x25 Folded (40-47): Effects 01</span>
<span class="t" id="t35" style="left:52.70px;top:555.00px;font-size:8.24px;color:#262626;letter-spacing:-0.267px;">Δ PixelTree-16x25 Folded (40-47): Effects 02</span>
<span class="t" id="t36" style="left:52.70px;top:567.10px;font-size:8.24px;color:#262626;letter-spacing:-0.267px;">Δ PixelTree-16x25 Folded (40-47): Effects 03</span>
<div class="b" style="left:50.4px;top:572.4px;width:158.6px;height:1.8px;background:#0a78d8;"></div>
<div class="b" style="left:6.5px;top:574.8px;width:209px;height:11px;background:#f0f0f0;"></div>
<div class="b" style="left:18.5px;top:575.2px;width:179.2px;height:10.4px;background:#c9c9c9;"></div>
<svg class="b" style="left:7px;top:575px;" width="11" height="11" viewBox="0 0 11 11"><path d="M7 2.7 L4 5.5 L7 8.3" stroke="#444" stroke-width="1.3" fill="none"/></svg>
<svg class="b" style="left:204px;top:575px;" width="11" height="11" viewBox="0 0 11 11"><path d="M4 2.7 L7 5.5 L4 8.3" stroke="#444" stroke-width="1.3" fill="none"/></svg>
<div class="b" style="left:215px;top:490px;width:3.4px;height:96.5px;background:#929292;"></div>
<div class="b" style="left:219px;top:490px;width:417px;height:17.3px;background:#f2ee82;"></div>
<svg class="b" style="left:219px;top:490px;" width="417" height="17.3" viewBox="0 0 417 17.3"><rect x="5.94" y="13.6" width="0.8" height="2.2" fill="#55552a"/><rect x="14.27" y="13.6" width="0.8" height="2.2" fill="#55552a"/><path d="M22.00 12 h2 v2.6 l-1 1.3 l-1 -1.3 Z" fill="#111"/><rect x="30.93" y="13.6" width="0.8" height="2.2" fill="#55552a"/><rect x="39.26" y="13.6" width="0.8" height="2.2" fill="#55552a"/><rect x="47.60" y="13.6" width="0.8" height="2.2" fill="#55552a"/><rect x="55.93" y="13.6" width="0.8" height="2.2" fill="#55552a"/><rect x="64.26" y="13.6" width="0.8" height="2.2" fill="#55552a"/><rect x="72.59" y="13.6" width="0.8" height="2.2" fill="#55552a"/><rect x="80.92" y="13.6" width="0.8" height="2.2" fill="#55552a"/><rect x="89.26" y="13.6" width="0.8" height="2.2" fill="#55552a"/><rect x="97.59" y="13.6" width="0.8" height="2.2" fill="#55552a"/><path d="M105.32 12 h2 v2.6 l-1 1.3 l-1 -1.3 Z" fill="#111"/><rect x="114.25" y="13.6" width="0.8" height="2.2" fill="#55552a"/><rect x="122.58" y="13.6" width="0.8" height="2.2" fill="#55552a"/><rect x="130.92" y="13.6" width="0.8" height="2.2" fill="#55552a"/><rect x="139.25" y="13.6" width="0.8" height="2.2" fill="#55552a"/><rect x="147.58" y="13.6" width="0.8" height="2.2" fill="#55552a"/><rect x="155.91" y="13.6" width="0.8" height="2.2" fill="#55552a"/><rect x="164.24" y="13.6" width="0.8" height="2.2" fill="#55552a"/><rect x="172.58" y="13.6" width="0.8" height="2.2" fill="#55552a"/><rect x="180.91" y="13.6" width="0.8" height="2.2" fill="#55552a"/><path d="M188.64 12 h2 v2.6 l-1 1.3 l-1 -1.3 Z" fill="#111"/><rect x="197.57" y="13.6" width="0.8" height="2.2" fill="#55552a"/><rect x="205.90" y="13.6" width="0.8" height="2.2" fill="#55552a"/><rect x="214.24" y="13.6" width="0.8" height="2.2" fill="#55552a"/><rect x="222.57" y="13.6" width="0.8" height="2.2" fill="#55552a"/><rect x="230.90" y="13.6" width="0.8" height="2.2" fill="#55552a"/><rect x="239.23" y="13.6" width="0.8" height="2.2" fill="#55552a"/><rect x="247.56" y="13.6" width="0.8" height="2.2" fill="#55552a"/><rect x="255.90" y="13.6" width="0.8" height="2.2" fill="#55552a"/><rect x="264.23" y="13.6" width="0.8" height="2.2" fill="#55552a"/><path d="M271.96 12 h2 v2.6 l-1 1.3 l-1 -1.3 Z" fill="#111"/><rect x="280.89" y="13.6" width="0.8" height="2.2" fill="#55552a"/><rect x="289.22" y="13.6" width="0.8" height="2.2" fill="#55552a"/><rect x="297.56" y="13.6" width="0.8" height="2.2" fill="#55552a"/><rect x="305.89" y="13.6" width="0.8" height="2.2" fill="#55552a"/><rect x="314.22" y="13.6" width="0.8" height="2.2" fill="#55552a"/><rect x="322.55" y="13.6" width="0.8" height="2.2" fill="#55552a"/><rect x="330.88" y="13.6" width="0.8" height="2.2" fill="#55552a"/><rect x="339.22" y="13.6" width="0.8" height="2.2" fill="#55552a"/><rect x="347.55" y="13.6" width="0.8" height="2.2" fill="#55552a"/><path d="M355.28 12 h2 v2.6 l-1 1.3 l-1 -1.3 Z" fill="#111"/><rect x="364.21" y="13.6" width="0.8" height="2.2" fill="#55552a"/><rect x="372.54" y="13.6" width="0.8" height="2.2" fill="#55552a"/><rect x="380.88" y="13.6" width="0.8" height="2.2" fill="#55552a"/><rect x="389.21" y="13.6" width="0.8" height="2.2" fill="#55552a"/><rect x="397.54" y="13.6" width="0.8" height="2.2" fill="#55552a"/><rect x="405.87" y="13.6" width="0.8" height="2.2" fill="#55552a"/><rect x="414.20" y="13.6" width="0.8" height="2.2" fill="#55552a"/></svg>
<span class="t" id="t37" style="left:232.70px;top:497.40px;font-size:9.7px;color:#1c1c1c;letter-spacing:-0.086px;-webkit-text-stroke:0.45px #1c1c1c;">2:48</span>
<span class="t" id="t38" style="left:316.02px;top:497.40px;font-size:9.7px;color:#1c1c1c;letter-spacing:-0.086px;-webkit-text-stroke:0.45px #1c1c1c;">2:50</span>
<span class="t" id="t39" style="left:399.34px;top:497.40px;font-size:9.7px;color:#1c1c1c;letter-spacing:-0.086px;-webkit-text-stroke:0.45px #1c1c1c;">2:52</span>
<span class="t" id="t40" style="left:482.66px;top:497.40px;font-size:9.7px;color:#1c1c1c;letter-spacing:-0.086px;-webkit-text-stroke:0.45px #1c1c1c;">2:54</span>
<span class="t" id="t41" style="left:565.98px;top:497.40px;font-size:9.7px;color:#1c1c1c;letter-spacing:-0.086px;-webkit-text-stroke:0.45px #1c1c1c;">2:56</span>
<svg class="b" style="left:219px;top:507.2px;" width="417" height="28.3" viewBox="0 0 417 28.3"><rect width="417" height="28.3" fill="#fff"/><polygon points="0.0,7.0 0.5,3.9 1.0,4.2 1.5,5.5 2.0,7.7 2.5,5.4 3.0,2.3 3.5,5.1 4.0,5.3 4.5,9.1 5.0,4.9 5.5,8.4 6.0,5.4 6.5,10.5 7.0,6.6 7.5,6.0 8.0,1.3 8.5,5.5 9.0,2.3 9.5,1.8 10.0,4.9 10.5,6.1 11.0,2.0 11.5,4.2 12.0,2.5 12.5,6.3 13.0,3.5 13.5,5.5 14.0,5.5 14.5,7.4 15.0,3.9 15.5,5.1 16.0,2.1 16.5,6.0 17.0,5.1 17.5,5.1 18.0,6.2 18.5,9.4 19.0,3.9 19.5,4.9 20.0,6.0 20.5,6.3 21.0,8.1 21.5,8.0 22.0,7.7 22.5,6.9 23.0,7.2 23.5,7.3 24.0,3.8 24.5,3.9 25.0,6.0 25.5,3.5 26.0,5.6 26.5,3.3 27.0,4.8 27.5,5.7 28.0,5.2 28.5,3.6 29.0,2.9 29.5,3.7 30.0,4.0 30.5,7.3 31.0,2.1 31.5,5.6 32.0,3.3 32.5,5.3 33.0,4.5 33.5,3.6 34.0,3.5 34.5,3.3 35.0,7.6 35.5,4.3 36.0,5.5 36.5,6.4 37.0,6.7 37.5,6.6 38.0,3.8 38.5,4.0 39.0,5.5 39.5,7.7 40.0,3.2 40.5,6.5 41.0,8.5 41.5,3.4 42.0,6.6 42.5,5.6 43.0,5.2 43.5,3.9 44.0,6.5 44.5,3.9 45.0,4.5 45.5,4.5 46.0,4.7 46.5,1.7 47.0,6.0 47.5,3.7 48.0,0.8 48.5,0.8 49.0,1.8 49.5,1.4 50.0,5.2 50.5,5.8 51.0,4.6 51.5,5.3 52.0,1.5 52.5,5.8 53.0,1.5 53.5,6.9 54.0,4.5 54.5,1.5 55.0,4.6 55.5,5.1 56.0,3.7 56.5,4.5 57.0,5.9 57.5,4.6 58.0,5.3 58.5,8.1 59.0,7.3 59.5,8.9 60.0,6.5 60.5,8.6 61.0,8.2 61.5,6.3 62.0,5.3 62.5,4.9 63.0,5.5 63.5,8.1 64.0,8.5 64.5,3.6 65.0,3.8 65.5,7.5 66.0,8.4 66.5,4.1 67.0,2.8 67.5,7.2 68.0,4.5 68.5,4.6 69.0,3.4 69.5,3.1 70.0,7.7 70.5,3.4 71.0,6.4 71.5,9.0 72.0,7.2 72.5,5.3 73.0,5.1 73.5,7.4 74.0,9.0 74.5,7.1 75.0,6.5 75.5,7.6 76.0,7.6 76.5,3.4 77.0,6.3 77.5,5.2 78.0,4.0 78.5,4.9 79.0,9.2 79.5,8.4 80.0,6.4 80.5,7.3 81.0,3.4 81.5,6.9 82.0,5.5 82.5,5.8 83.0,3.7 83.5,5.3 84.0,8.2 84.5,5.8 85.0,6.1 85.5,5.0 86.0,5.3 86.5,3.8 87.0,3.9 87.5,7.6 88.0,6.1 88.5,4.7 89.0,0.8 89.5,2.5 90.0,3.6 90.5,5.8 91.0,7.9 91.5,8.0 92.0,8.8 92.5,7.1 93.0,6.0 93.5,2.9 94.0,1.7 94.5,4.3 95.0,2.7 95.5,0.8 96.0,3.0 96.5,1.0 97.0,4.6 97.5,5.1 98.0,4.0 98.5,4.2 99.0,2.7 99.5,2.4 100.0,5.1 100.5,2.1 101.0,5.5 101.5,1.9 102.0,3.5 102.5,2.3 103.0,4.5 103.5,5.5 104.0,6.8 104.5,2.7 105.0,1.0 105.5,2.3 106.0,1.4 106.5,1.1 107.0,4.3 107.5,3.2 108.0,2.3 108.5,1.8 109.0,3.1 109.5,5.4 110.0,3.4 110.5,3.6 111.0,3.4 111.5,2.7 112.0,5.0 112.5,4.8 113.0,3.8 113.5,6.7 114.0,2.6 114.5,2.5 115.0,3.0 115.5,5.4 116.0,6.4 116.5,3.7 117.0,3.4 117.5,4.6 118.0,2.8 118.5,3.6 119.0,6.2 119.5,3.8 120.0,3.1 120.5,5.9 121.0,5.7 121.5,5.3 122.0,5.4 122.5,1.3 123.0,3.9 123.5,4.9 124.0,7.0 124.5,4.9 125.0,5.1 125.5,5.4 126.0,5.3 126.5,3.6 127.0,6.3 127.5,6.1 128.0,3.7 128.5,2.7 129.0,1.7 129.5,6.2 130.0,3.6 130.5,3.4 131.0,6.1 131.5,3.0 132.0,5.7 132.5,4.0 133.0,7.5 133.5,4.6 134.0,8.9 134.5,8.4 135.0,3.8 135.5,5.1 136.0,7.5 136.5,6.7 137.0,6.5 137.5,5.3 138.0,6.5 138.5,6.2 139.0,2.0 139.5,4.6 140.0,3.9 140.5,4.8 141.0,1.9 141.5,5.6 142.0,4.7 142.5,4.0 143.0,5.5 143.5,7.6 144.0,6.2 144.5,5.9 145.0,1.9 145.5,4.0 146.0,2.3 146.5,1.8 147.0,0.8 147.5,4.6 148.0,0.8 148.5,2.4 149.0,0.8 149.5,3.5 150.0,0.8 150.5,4.5 151.0,5.9 151.5,5.4 152.0,3.2 152.5,3.6 153.0,2.7 153.5,2.6 154.0,3.4 154.5,4.8 155.0,8.1 155.5,4.3 156.0,2.0 156.5,1.2 157.0,4.9 157.5,3.9 158.0,3.7 158.5,2.5 159.0,3.3 159.5,6.4 160.0,4.7 160.5,1.9 161.0,2.3 161.5,1.5 162.0,1.3 162.5,3.6 163.0,0.8 163.5,3.1 164.0,0.8 164.5,0.8 165.0,3.7 165.5,2.4 166.0,4.0 166.5,0.8 167.0,1.0 167.5,0.8 168.0,0.8 168.5,2.1 169.0,2.4 169.5,0.8 170.0,2.1 170.5,3.5 171.0,0.8 171.5,2.7 172.0,6.0 172.5,3.4 173.0,7.8 173.5,2.9 174.0,4.4 174.5,3.5 175.0,4.8 175.5,5.1 176.0,5.6 176.5,5.7 177.0,4.6 177.5,4.6 178.0,4.4 178.5,4.4 179.0,0.8 179.5,3.3 180.0,3.5 180.5,3.4 181.0,4.7 181.5,4.8 182.0,4.7 182.5,3.2 183.0,3.5 183.5,7.1 184.0,5.7 184.5,4.0 185.0,2.8 185.5,5.0 186.0,4.7 186.5,5.0 187.0,8.1 187.5,7.5 188.0,6.5 188.5,4.0 189.0,5.9 189.5,3.8 190.0,5.4 190.5,3.1 191.0,3.4 191.5,3.7 192.0,5.5 192.5,7.4 193.0,5.4 193.5,4.8 194.0,2.8 194.5,7.3 195.0,7.1 195.5,10.2 196.0,9.4 196.5,8.8 197.0,7.3 197.5,4.7 198.0,4.8 198.5,7.9 199.0,4.5 199.5,2.6 200.0,4.6 200.5,2.4 201.0,2.0 201.5,3.2 202.0,4.5 202.5,4.4 203.0,4.2 203.5,5.9 204.0,2.2 204.5,5.5 205.0,4.4 205.5,4.7 206.0,6.5 206.5,5.4 207.0,4.6 207.5,3.4 208.0,7.2 208.5,8.3 209.0,5.4 209.5,7.2 210.0,2.2 210.5,4.3 211.0,6.6 211.5,5.9 212.0,5.7 212.5,2.3 213.0,2.0 213.5,5.0 214.0,2.3 214.5,3.4 215.0,2.2 215.5,2.7 216.0,5.0 216.5,7.5 217.0,2.4 217.5,2.9 218.0,2.4 218.5,1.0 219.0,2.4 219.5,4.8 220.0,2.5 220.5,1.4 221.0,2.6 221.5,3.7 222.0,4.8 222.5,0.8 223.0,2.5 223.5,1.2 224.0,2.7 224.5,5.6 225.0,6.4 225.5,2.5 226.0,2.1 226.5,0.8 227.0,2.1 227.5,2.8 228.0,2.8 228.5,4.6 229.0,1.6 229.5,0.8 230.0,0.8 230.5,4.2 231.0,1.9 231.5,5.7 232.0,7.7 232.5,6.3 233.0,2.4 233.5,3.4 234.0,2.0 234.5,1.9 235.0,0.8 235.5,3.4 236.0,4.9 236.5,5.2 237.0,3.3 237.5,1.2 238.0,2.1 238.5,1.2 239.0,3.8 239.5,3.6 240.0,2.2 240.5,3.3 241.0,2.6 241.5,0.8 242.0,5.5 242.5,1.1 243.0,3.9 243.5,3.4 244.0,3.6 244.5,6.6 245.0,6.0 245.5,7.6 246.0,7.6 246.5,3.8 247.0,4.5 247.5,4.7 248.0,5.8 248.5,4.8 249.0,3.8 249.5,5.6 250.0,4.8 250.5,2.7 251.0,2.5 251.5,4.9 252.0,7.3 252.5,9.1 253.0,6.5 253.5,3.8 254.0,5.0 254.5,6.5 255.0,5.9 255.5,4.7 256.0,6.3 256.5,7.0 257.0,4.6 257.5,7.2 258.0,7.8 258.5,5.3 259.0,3.6 259.5,1.3 260.0,1.8 260.5,6.6 261.0,6.0 261.5,6.4 262.0,2.4 262.5,2.1 263.0,5.4 263.5,1.9 264.0,6.6 264.5,7.2 265.0,6.9 265.5,6.0 266.0,5.6 266.5,5.4 267.0,6.1 267.5,4.9 268.0,4.9 268.5,7.3 269.0,8.4 269.5,4.5 270.0,6.9 270.5,2.6 271.0,3.8 271.5,6.5 272.0,3.9 272.5,7.9 273.0,3.5 273.5,5.4 274.0,5.1 274.5,3.9 275.0,5.2 275.5,4.1 276.0,3.3 276.5,7.0 277.0,2.7 277.5,3.6 278.0,5.6 278.5,5.8 279.0,5.8 279.5,2.7 280.0,6.6 280.5,5.9 281.0,2.1 281.5,4.3 282.0,9.2 282.5,4.6 283.0,3.3 283.5,2.3 284.0,6.3 284.5,5.7 285.0,7.9 285.5,5.1 286.0,6.4 286.5,6.2 287.0,10.1 287.5,4.5 288.0,4.0 288.5,5.8 289.0,2.4 289.5,6.0 290.0,7.6 290.5,5.7 291.0,9.9 291.5,8.6 292.0,7.9 292.5,9.1 293.0,4.5 293.5,5.8 294.0,3.1 294.5,3.7 295.0,8.0 295.5,7.1 296.0,5.8 296.5,6.8 297.0,5.2 297.5,4.6 298.0,9.5 298.5,8.3 299.0,9.3 299.5,3.8 300.0,6.2 300.5,5.5 301.0,7.5 301.5,6.4 302.0,7.6 302.5,9.5 303.0,8.7 303.5,5.0 304.0,9.3 304.5,8.0 305.0,8.2 305.5,9.1 306.0,11.5 306.5,8.4 307.0,6.9 307.5,7.1 308.0,5.5 308.5,9.7 309.0,6.5 309.5,9.5 310.0,10.8 310.5,10.9 311.0,10.9 311.5,6.5 312.0,10.0 312.5,8.7 313.0,10.2 313.5,7.4 314.0,4.4 314.5,4.7 315.0,0.8 315.5,1.0 316.0,5.6 316.5,2.7 317.0,1.0 317.5,2.6 318.0,3.5 318.5,2.4 319.0,2.7 319.5,5.4 320.0,5.6 320.5,4.4 321.0,5.2 321.5,2.7 322.0,3.5 322.5,3.8 323.0,3.3 323.5,0.9 324.0,4.4 324.5,6.7 325.0,4.4 325.5,7.5 326.0,5.1 326.5,3.9 327.0,5.4 327.5,5.6 328.0,5.2 328.5,2.0 329.0,6.3 329.5,3.7 330.0,1.5 330.5,3.6 331.0,4.2 331.5,3.1 332.0,2.4 332.5,5.9 333.0,3.0 333.5,5.5 334.0,0.8 334.5,1.1 335.0,1.7 335.5,5.2 336.0,0.8 336.5,0.8 337.0,0.8 337.5,1.5 338.0,0.8 338.5,0.8 339.0,0.8 339.5,0.8 340.0,0.8 340.5,2.2 341.0,3.4 341.5,3.4 342.0,2.3 342.5,4.0 343.0,0.8 343.5,2.4 344.0,5.5 344.5,4.3 345.0,7.4 345.5,5.1 346.0,4.9 346.5,7.4 347.0,3.6 347.5,3.1 348.0,2.1 348.5,3.6 349.0,4.6 349.5,2.7 350.0,0.8 350.5,2.8 351.0,4.9 351.5,0.8 352.0,0.8 352.5,2.5 353.0,4.3 353.5,4.2 354.0,3.3 354.5,4.0 355.0,0.8 355.5,5.1 356.0,4.2 356.5,0.8 357.0,2.7 357.5,1.5 358.0,0.9 358.5,0.8 359.0,0.8 359.5,2.9 360.0,1.8 360.5,0.8 361.0,2.7 361.5,7.8 362.0,2.2 362.5,1.5 363.0,2.4 363.5,4.4 364.0,4.4 364.5,6.0 365.0,6.9 365.5,7.8 366.0,6.0 366.5,4.2 367.0,4.9 367.5,6.2 368.0,8.0 368.5,8.9 369.0,5.6 369.5,6.7 370.0,3.3 370.5,4.8 371.0,7.6 371.5,2.9 372.0,1.9 372.5,5.1 373.0,5.7 373.5,3.2 374.0,5.6 374.5,3.9 375.0,2.9 375.5,5.3 376.0,0.8 376.5,4.6 377.0,4.4 377.5,1.3 378.0,4.1 378.5,4.1 379.0,5.6 379.5,4.4 380.0,3.1 380.5,4.2 381.0,3.3 381.5,4.5 382.0,4.6 382.5,4.8 383.0,6.2 383.5,4.7 384.0,5.7 384.5,3.5 385.0,4.4 385.5,4.7 386.0,5.1 386.5,4.4 387.0,4.5 387.5,3.9 388.0,4.0 388.5,1.2 389.0,4.2 389.5,3.4 390.0,5.2 390.5,1.2 391.0,2.5 391.5,3.5 392.0,3.2 392.5,1.9 393.0,2.3 393.5,4.8 394.0,3.7 394.5,2.0 395.0,3.5 395.5,2.0 396.0,0.8 396.5,2.7 397.0,3.3 397.5,0.8 398.0,0.8 398.5,2.6 399.0,1.7 399.5,2.7 400.0,0.8 400.5,0.8 401.0,2.7 401.5,0.8 402.0,0.8 402.5,5.6 403.0,4.3 403.5,4.6 404.0,4.9 404.5,2.7 405.0,4.6 405.5,2.9 406.0,5.5 406.5,0.8 407.0,2.1 407.5,2.6 408.0,3.3 408.5,1.5 409.0,1.8 409.5,2.4 410.0,4.3 410.5,0.8 411.0,1.3 411.5,2.8 412.0,1.6 412.5,2.9 413.0,0.8 413.5,0.8 414.0,1.5 414.5,0.9 415.0,2.3 415.5,0.8 416.0,1.8 416.5,3.2 417.0,4.6 417.0,23.8 416.5,22.9 416.0,25.2 415.5,21.6 415.0,26.1 414.5,23.8 414.0,24.6 413.5,26.5 413.0,25.6 412.5,24.3 412.0,24.9 411.5,22.6 411.0,25.3 410.5,22.7 410.0,23.8 409.5,24.2 409.0,23.9 408.5,25.5 408.0,27.2 407.5,26.2 407.0,24.4 406.5,22.3 406.0,23.2 405.5,25.2 405.0,25.2 404.5,24.2 404.0,23.2 403.5,25.2 403.0,22.1 402.5,21.9 402.0,26.4 401.5,22.3 401.0,22.9 400.5,23.0 400.0,26.4 399.5,25.6 399.0,25.8 398.5,27.5 398.0,26.1 397.5,22.8 397.0,27.5 396.5,27.5 396.0,24.4 395.5,24.0 395.0,24.5 394.5,24.3 394.0,23.0 393.5,24.5 393.0,24.3 392.5,27.4 392.0,25.4 391.5,25.1 391.0,23.7 390.5,25.3 390.0,21.5 389.5,22.5 389.0,22.0 388.5,21.1 388.0,21.5 387.5,25.5 387.0,25.3 386.5,22.3 386.0,25.0 385.5,21.2 385.0,24.4 384.5,24.3 384.0,24.4 383.5,25.8 383.0,27.0 382.5,24.0 382.0,20.3 381.5,23.4 381.0,24.0 380.5,23.2 380.0,23.5 379.5,21.4 379.0,23.2 378.5,25.4 378.0,24.7 377.5,27.5 377.0,27.3 376.5,21.8 376.0,25.0 375.5,21.1 375.0,25.4 374.5,20.8 374.0,24.8 373.5,24.1 373.0,20.5 372.5,25.6 372.0,20.8 371.5,25.2 371.0,23.8 370.5,21.1 370.0,22.6 369.5,24.4 369.0,23.2 368.5,17.8 368.0,18.3 367.5,20.2 367.0,19.2 366.5,22.6 366.0,22.8 365.5,25.9 365.0,24.4 364.5,24.2 364.0,27.5 363.5,27.2 363.0,24.6 362.5,26.1 362.0,27.3 361.5,26.9 361.0,27.5 360.5,27.5 360.0,21.6 359.5,22.0 359.0,25.5 358.5,25.0 358.0,24.3 357.5,24.6 357.0,26.8 356.5,24.4 356.0,24.7 355.5,23.5 355.0,26.9 354.5,24.7 354.0,23.2 353.5,25.8 353.0,26.5 352.5,26.9 352.0,22.8 351.5,24.7 351.0,26.5 350.5,27.1 350.0,22.3 349.5,27.5 349.0,24.6 348.5,24.6 348.0,24.8 347.5,23.3 347.0,27.5 346.5,27.5 346.0,26.2 345.5,25.3 345.0,22.0 344.5,24.9 344.0,23.4 343.5,27.1 343.0,27.5 342.5,23.1 342.0,25.3 341.5,24.8 341.0,24.9 340.5,26.6 340.0,25.5 339.5,25.4 339.0,23.7 338.5,23.3 338.0,22.6 337.5,19.3 337.0,24.6 336.5,20.9 336.0,22.6 335.5,21.7 335.0,22.9 334.5,21.3 334.0,20.3 333.5,24.4 333.0,22.4 332.5,24.6 332.0,21.2 331.5,26.0 331.0,22.9 330.5,23.2 330.0,23.9 329.5,25.7 329.0,22.7 328.5,23.0 328.0,20.0 327.5,24.5 327.0,21.0 326.5,22.0 326.0,21.5 325.5,24.4 325.0,21.0 324.5,20.6 324.0,20.4 323.5,20.9 323.0,20.6 322.5,22.5 322.0,18.7 321.5,19.3 321.0,19.2 320.5,22.1 320.0,19.7 319.5,23.0 319.0,21.6 318.5,23.6 318.0,22.6 317.5,22.2 317.0,22.7 316.5,22.0 316.0,24.2 315.5,25.8 315.0,25.3 314.5,23.3 314.0,23.2 313.5,24.1 313.0,24.6 312.5,26.4 312.0,24.2 311.5,23.6 311.0,27.5 310.5,22.8 310.0,22.4 309.5,24.6 309.0,24.4 308.5,23.3 308.0,26.5 307.5,23.4 307.0,22.2 306.5,23.5 306.0,20.6 305.5,22.4 305.0,20.5 304.5,24.4 304.0,22.4 303.5,24.2 303.0,21.1 302.5,20.5 302.0,25.7 301.5,19.0 301.0,21.9 300.5,21.3 300.0,19.9 299.5,22.4 299.0,25.2 298.5,21.0 298.0,21.2 297.5,26.1 297.0,22.6 296.5,22.0 296.0,21.7 295.5,26.6 295.0,24.5 294.5,23.7 294.0,22.8 293.5,22.9 293.0,23.6 292.5,26.5 292.0,26.3 291.5,22.2 291.0,22.0 290.5,23.5 290.0,22.7 289.5,22.3 289.0,24.0 288.5,23.9 288.0,22.7 287.5,22.2 287.0,23.2 286.5,18.6 286.0,19.4 285.5,22.9 285.0,21.3 284.5,25.3 284.0,22.1 283.5,23.4 283.0,25.5 282.5,20.7 282.0,21.4 281.5,21.3 281.0,19.1 280.5,19.3 280.0,24.9 279.5,21.0 279.0,20.8 278.5,18.5 278.0,21.2 277.5,20.8 277.0,22.7 276.5,22.0 276.0,24.1 275.5,20.7 275.0,22.3 274.5,23.1 274.0,19.7 273.5,21.8 273.0,19.7 272.5,19.7 272.0,22.0 271.5,19.6 271.0,21.6 270.5,21.9 270.0,23.4 269.5,20.6 269.0,18.7 268.5,20.1 268.0,24.7 267.5,25.0 267.0,25.1 266.5,25.0 266.0,25.2 265.5,24.0 265.0,27.5 264.5,26.9 264.0,27.0 263.5,20.6 263.0,25.0 262.5,22.8 262.0,21.4 261.5,24.9 261.0,25.5 260.5,25.1 260.0,26.3 259.5,26.3 259.0,27.0 258.5,24.6 258.0,23.9 257.5,22.3 257.0,26.8 256.5,27.3 256.0,23.8 255.5,23.4 255.0,23.2 254.5,24.5 254.0,20.2 253.5,21.1 253.0,24.3 252.5,25.7 252.0,24.2 251.5,23.2 251.0,24.4 250.5,22.2 250.0,21.8 249.5,21.7 249.0,24.9 248.5,22.3 248.0,21.0 247.5,26.9 247.0,24.4 246.5,25.5 246.0,24.9 245.5,25.8 245.0,27.1 244.5,24.3 244.0,21.3 243.5,22.3 243.0,22.6 242.5,20.9 242.0,24.7 241.5,25.6 241.0,21.6 240.5,22.3 240.0,20.8 239.5,25.7 239.0,23.8 238.5,24.2 238.0,22.3 237.5,20.5 237.0,22.9 236.5,23.4 236.0,19.6 235.5,20.2 235.0,20.3 234.5,21.8 234.0,21.2 233.5,22.2 233.0,22.7 232.5,20.6 232.0,24.2 231.5,25.6 231.0,24.8 230.5,24.4 230.0,24.1 229.5,21.8 229.0,22.6 228.5,19.4 228.0,22.2 227.5,21.4 227.0,23.7 226.5,23.3 226.0,19.1 225.5,21.2 225.0,22.0 224.5,19.6 224.0,22.7 223.5,19.4 223.0,21.5 222.5,21.3 222.0,21.5 221.5,24.3 221.0,24.6 220.5,20.6 220.0,24.9 219.5,21.7 219.0,21.1 218.5,19.9 218.0,20.1 217.5,22.4 217.0,22.9 216.5,23.6 216.0,25.0 215.5,25.9 215.0,25.6 214.5,25.9 214.0,26.1 213.5,23.0 213.0,22.0 212.5,25.0 212.0,24.4 211.5,27.5 211.0,21.9 210.5,23.1 210.0,23.7 209.5,25.5 209.0,21.9 208.5,25.5 208.0,20.7 207.5,22.5 207.0,19.8 206.5,23.4 206.0,26.1 205.5,26.0 205.0,24.0 204.5,23.6 204.0,20.9 203.5,21.6 203.0,25.2 202.5,25.0 202.0,23.2 201.5,24.2 201.0,19.2 200.5,21.6 200.0,22.7 199.5,24.9 199.0,27.4 198.5,25.1 198.0,25.5 197.5,25.2 197.0,23.8 196.5,27.0 196.0,25.1 195.5,24.9 195.0,22.5 194.5,24.3 194.0,25.7 193.5,23.8 193.0,25.0 192.5,19.4 192.0,20.4 191.5,22.6 191.0,22.6 190.5,22.0 190.0,25.1 189.5,24.2 189.0,25.0 188.5,25.8 188.0,23.7 187.5,22.3 187.0,20.6 186.5,21.2 186.0,23.3 185.5,25.6 185.0,21.2 184.5,18.8 184.0,22.1 183.5,22.5 183.0,25.1 182.5,22.0 182.0,22.0 181.5,20.6 181.0,24.5 180.5,23.2 180.0,24.6 179.5,24.6 179.0,24.4 178.5,26.1 178.0,24.1 177.5,23.5 177.0,21.5 176.5,22.1 176.0,22.2 175.5,22.0 175.0,24.1 174.5,24.4 174.0,25.6 173.5,23.6 173.0,25.2 172.5,20.6 172.0,20.4 171.5,20.8 171.0,22.9 170.5,23.6 170.0,25.0 169.5,24.5 169.0,25.9 168.5,23.7 168.0,25.6 167.5,23.3 167.0,26.0 166.5,25.5 166.0,27.2 165.5,22.1 165.0,23.5 164.5,23.5 164.0,27.5 163.5,27.5 163.0,26.0 162.5,25.9 162.0,27.5 161.5,27.5 161.0,27.5 160.5,23.5 160.0,27.5 159.5,24.9 159.0,27.5 158.5,23.8 158.0,27.5 157.5,27.5 157.0,23.7 156.5,24.9 156.0,23.3 155.5,20.9 155.0,23.6 154.5,23.3 154.0,22.5 153.5,22.5 153.0,24.7 152.5,20.9 152.0,26.8 151.5,26.7 151.0,24.0 150.5,23.4 150.0,24.3 149.5,20.7 149.0,23.5 148.5,23.1 148.0,24.7 147.5,24.1 147.0,20.4 146.5,23.6 146.0,24.7 145.5,24.0 145.0,22.8 144.5,21.4 144.0,25.5 143.5,24.3 143.0,20.7 142.5,21.1 142.0,23.4 141.5,23.0 141.0,20.6 140.5,24.3 140.0,21.0 139.5,23.7 139.0,19.1 138.5,21.3 138.0,20.8 137.5,20.9 137.0,22.7 136.5,21.7 136.0,22.8 135.5,24.3 135.0,20.5 134.5,21.6 134.0,24.6 133.5,21.6 133.0,20.8 132.5,21.9 132.0,22.5 131.5,25.2 131.0,24.3 130.5,19.6 130.0,20.4 129.5,20.2 129.0,25.8 128.5,24.3 128.0,24.2 127.5,25.2 127.0,20.6 126.5,23.3 126.0,21.4 125.5,22.5 125.0,20.9 124.5,23.8 124.0,24.8 123.5,26.8 123.0,25.7 122.5,24.1 122.0,25.9 121.5,23.4 121.0,22.4 120.5,25.6 120.0,21.4 119.5,21.6 119.0,21.3 118.5,21.9 118.0,21.4 117.5,21.4 117.0,25.7 116.5,20.6 116.0,23.6 115.5,24.5 115.0,23.5 114.5,24.2 114.0,24.8 113.5,24.2 113.0,25.6 112.5,25.2 112.0,25.3 111.5,27.5 111.0,25.9 110.5,25.2 110.0,27.5 109.5,25.6 109.0,26.3 108.5,23.8 108.0,23.6 107.5,23.5 107.0,24.3 106.5,23.3 106.0,21.0 105.5,21.7 105.0,24.7 104.5,21.8 104.0,25.8 103.5,23.6 103.0,22.2 102.5,24.6 102.0,19.7 101.5,21.2 101.0,20.5 100.5,24.5 100.0,21.2 99.5,23.1 99.0,19.0 98.5,20.7 98.0,22.0 97.5,22.5 97.0,23.3 96.5,22.5 96.0,24.2 95.5,25.6 95.0,20.6 94.5,23.3 94.0,22.6 93.5,24.3 93.0,20.5 92.5,20.9 92.0,19.5 91.5,19.3 91.0,21.1 90.5,20.7 90.0,22.0 89.5,21.4 89.0,20.9 88.5,21.7 88.0,21.5 87.5,20.7 87.0,21.9 86.5,19.8 86.0,21.1 85.5,22.1 85.0,21.3 84.5,23.0 84.0,22.1 83.5,24.4 83.0,23.4 82.5,23.1 82.0,23.2 81.5,23.0 81.0,22.9 80.5,21.9 80.0,21.9 79.5,24.8 79.0,24.3 78.5,24.7 78.0,25.0 77.5,23.6 77.0,27.5 76.5,24.9 76.0,20.0 75.5,24.7 75.0,23.2 74.5,20.9 74.0,23.5 73.5,23.9 73.0,25.1 72.5,27.5 72.0,25.1 71.5,22.2 71.0,21.8 70.5,22.8 70.0,22.8 69.5,21.5 69.0,27.5 68.5,22.6 68.0,25.2 67.5,25.7 67.0,23.7 66.5,21.2 66.0,26.4 65.5,25.1 65.0,24.6 64.5,27.1 64.0,24.9 63.5,22.6 63.0,24.5 62.5,24.4 62.0,25.1 61.5,25.7 61.0,23.8 60.5,22.1 60.0,21.2 59.5,22.3 59.0,23.8 58.5,23.8 58.0,24.8 57.5,22.3 57.0,25.5 56.5,23.0 56.0,22.4 55.5,21.2 55.0,24.2 54.5,25.0 54.0,19.3 53.5,21.9 53.0,22.5 52.5,23.4 52.0,22.6 51.5,22.7 51.0,21.4 50.5,22.0 50.0,22.4 49.5,23.2 49.0,23.3 48.5,24.3 48.0,22.1 47.5,25.4 47.0,26.7 46.5,22.9 46.0,20.8 45.5,22.2 45.0,24.7 44.5,22.6 44.0,24.5 43.5,23.0 43.0,21.2 42.5,20.7 42.0,21.6 41.5,20.6 41.0,23.4 40.5,19.8 40.0,22.8 39.5,24.1 39.0,22.6 38.5,21.3 38.0,17.5 37.5,17.3 37.0,19.6 36.5,23.4 36.0,20.6 35.5,20.9 35.0,22.4 34.5,20.6 34.0,23.5 33.5,25.2 33.0,26.0 32.5,21.7 32.0,26.2 31.5,26.6 31.0,25.4 30.5,25.4 30.0,26.6 29.5,22.7 29.0,24.8 28.5,24.5 28.0,23.0 27.5,25.7 27.0,22.4 26.5,23.1 26.0,25.4 25.5,24.8 25.0,21.5 24.5,24.2 24.0,21.4 23.5,23.3 23.0,21.1 22.5,22.6 22.0,21.4 21.5,20.4 21.0,20.3 20.5,20.7 20.0,19.9 19.5,22.1 19.0,23.5 18.5,23.7 18.0,24.0 17.5,26.0 17.0,25.0 16.5,22.9 16.0,23.5 15.5,22.9 15.0,20.9 14.5,24.7 14.0,19.8 13.5,24.2 13.0,24.8 12.5,24.5 12.0,23.4 11.5,26.0 11.0,23.5 10.5,23.2 10.0,21.0 9.5,25.0 9.0,22.7 8.5,25.1 8.0,26.1 7.5,21.7 7.0,22.9 6.5,22.3 6.0,22.4 5.5,22.8 5.0,23.8 4.5,18.5 4.0,21.8 3.5,20.3 3.0,23.0 2.5,24.3 2.0,18.6 1.5,22.3 1.0,21.7 0.5,21.8 0.0,22.6" fill="#0000f4"/></svg>
<div class="b" style="left:219px;top:535.4px;width:417px;height:37.80000000000007px;background:#000;"></div>
<div class="b" style="left:219px;top:535.4px;width:232px;height:12.399999999999977px;background:#d6d6d6;"></div>
<div class="b" style="left:540px;top:535.4px;width:96px;height:12.399999999999977px;background:#f2f2f2;"></div>
<div class="b" style="left:451px;top:547.8px;width:89px;height:11.800000000000045px;background:#d6d6d6;"></div>
<div class="b" style="left:220.8px;top:535.6px;width:230.2px;height:6px;overflow:hidden;font-family:'Liberation Mono',monospace;font-size:6.6px;line-height:6px;letter-spacing:1.247px;color:#000;white-space:nowrap;">SpirSpirSpirSpirSpirSpirSpirSpirSpirSpirSpirSp</div>
<div class="b" style="left:220.8px;top:541.2px;width:230.2px;height:6px;overflow:hidden;font-family:'Liberation Mono',monospace;font-size:6.6px;line-height:6px;letter-spacing:1.247px;color:#000;white-space:nowrap;">SpirSpirSpirSpirSpirSpirSpirSpirSpirSpirSpirSp</div>
<div class="b" style="left:541.8px;top:535.6px;width:94.2px;height:6px;overflow:hidden;font-family:'Liberation Mono',monospace;font-size:6.6px;line-height:6px;letter-spacing:1.247px;color:#000;white-space:nowrap;">eteMeteMeteMeteMeteM</div>
<div class="b" style="left:541.8px;top:541.2px;width:94.2px;height:6px;overflow:hidden;font-family:'Liberation Mono',monospace;font-size:6.6px;line-height:6px;letter-spacing:1.247px;color:#000;white-space:nowrap;">eteMeteMeteMeteMeteM</div>
<div class="b" style="left:452.8px;top:548.0px;width:87.2px;height:6px;overflow:hidden;font-family:'Liberation Mono',monospace;font-size:6.6px;line-height:6px;letter-spacing:1.247px;color:#000;white-space:nowrap;">ColoColoColoColoCol</div>
<div class="b" style="left:452.8px;top:553.6px;width:87.2px;height:6px;overflow:hidden;font-family:'Liberation Mono',monospace;font-size:6.6px;line-height:6px;letter-spacing:1.247px;color:#000;white-space:nowrap;">ColoColoColoColoCol</div>
<svg class="b" style="left:219px;top:535.4px;" width="417" height="37.80000000000007" viewBox="0 0 417 37.80000000000007"><rect x="1.77" y="0" width="0.8" height="37.8" fill="#9a9a9a"/><rect x="22.60" y="0" width="0.8" height="37.8" fill="#9a9a9a"/><rect x="43.43" y="0" width="0.8" height="37.8" fill="#9a9a9a"/><rect x="64.26" y="0" width="0.8" height="37.8" fill="#9a9a9a"/><rect x="85.09" y="0" width="0.8" height="37.8" fill="#9a9a9a"/><rect x="105.92" y="0" width="0.8" height="37.8" fill="#9a9a9a"/><rect x="126.75" y="0" width="0.8" height="37.8" fill="#9a9a9a"/><rect x="147.58" y="0" width="0.8" height="37.8" fill="#9a9a9a"/><rect x="168.41" y="0" width="0.8" height="37.8" fill="#9a9a9a"/><rect x="189.24" y="0" width="0.8" height="37.8" fill="#9a9a9a"/><rect x="210.07" y="0" width="0.8" height="37.8" fill="#9a9a9a"/><rect x="230.90" y="0" width="0.8" height="37.8" fill="#9a9a9a"/><rect x="251.73" y="0" width="0.8" height="37.8" fill="#9a9a9a"/><rect x="272.56" y="0" width="0.8" height="37.8" fill="#9a9a9a"/><rect x="293.39" y="0" width="0.8" height="37.8" fill="#9a9a9a"/><rect x="314.22" y="0" width="0.8" height="37.8" fill="#9a9a9a"/><rect x="335.05" y="0" width="0.8" height="37.8" fill="#9a9a9a"/><rect x="355.88" y="0" width="0.8" height="37.8" fill="#9a9a9a"/><rect x="376.71" y="0" width="0.8" height="37.8" fill="#9a9a9a"/><rect x="397.54" y="0" width="0.8" height="37.8" fill="#9a9a9a"/><path d="M0 24.6 H417" stroke="#b4b4b4" stroke-width="0.9" stroke-dasharray="2.6 2.6"/><path d="M0 12.4 H232" stroke="#777" stroke-width="0.8"/><path d="M321 12.4 H417" stroke="#777" stroke-width="0.8"/><path d="M0 37.4 H417" stroke="#666" stroke-width="0.8"/></svg>
<div class="b" style="left:407.64px;top:535px;width:23.029999999999998px;height:13.2px;background:transparent;border:2px dotted #f6ea00;"></div>
<div class="b" style="left:637px;top:535.4px;width:11px;height:38.4px;background:#f0f0f0;"></div>
<div class="b" style="left:637.4px;top:549px;width:10.4px;height:12px;background:#c9c9c9;"></div>
<svg class="b" style="left:637px;top:536.5px;" width="11" height="10" viewBox="0 0 11 10"><path d="M2.7 7 L5.5 4 L8.3 7" stroke="#444" stroke-width="1.3" fill="none"/></svg>
<svg class="b" style="left:637px;top:563px;" width="11" height="10" viewBox="0 0 11 10"><path d="M2.7 3 L5.5 6 L8.3 3" stroke="#444" stroke-width="1.3" fill="none"/></svg>
<div class="b" style="left:219px;top:574px;width:417px;height:12px;background:#f0f0f0;"></div>
<div class="b" style="left:527px;top:575px;width:17.4px;height:10.4px;background:#c9c9c9;"></div>
<svg class="b" style="left:219.2px;top:575px;" width="11" height="11" viewBox="0 0 11 11"><path d="M7 2.7 L4 5.5 L7 8.3" stroke="#444" stroke-width="1.3" fill="none"/></svg>
<svg class="b" style="left:624.5px;top:575px;" width="11" height="11" viewBox="0 0 11 11"><path d="M4 2.7 L7 5.5 L4 8.3" stroke="#444" stroke-width="1.3" fill="none"/></svg>
<svg class="b" style="left:408px;top:514px;" width="21" height="28" viewBox="0 0 21 28"><path d="M6.6 0 H14.2 V8.4 H18.8 L10.4 26.6 L2 8.4 H6.6 Z" fill="#5b9bd5"/></svg>
<div class="b" style="left:346.1px;top:460.2px;width:148.6px;height:55.1px;background:linear-gradient(#71a6db,#5b97d5 50%,#4a89cf);border:1px solid #4a7fbe;"></div>
<span class="t" id="t42" style="left:382.40px;top:477.20px;font-size:17.2px;color:#fff;letter-spacing:-0.445px;">1. Click on</span>
<span class="t" id="t43" style="left:369.80px;top:499.90px;font-size:17.2px;color:#fff;letter-spacing:0.217px;">motion effect</span>
<div class="b" style="left:0px;top:590.8px;width:670px;height:15.2px;background:#007acc;"></div>
<div class="b" style="left:0px;top:590.8px;width:1px;height:15.2px;background:#3a5a78;"></div>
<span class="t" id="t44" style="left:6.70px;top:598.90px;font-size:8.59px;color:#fff;letter-spacing:-0.259px;">Total Time: 3:42.30 | Selected Time: 2:52.00 - 2:52.50 | Selected Duration: 0.50 | Select - cells</span>
<svg class="b" style="left:650px;top:593px;" width="10" height="11" viewBox="0 0 10 11"><path d="M1 3.6 Q1 0.6 4.6 0.6 Q8.2 0.6 8.2 3.6 Q8.2 5.6 6.6 7 V9.8 H2.6 V7 Q1 5.6 1 3.6 Z" fill="#34506c"/><rect x="3.2" y="8" width="2.8" height="1.6" fill="#9ab"/><circle cx="3.4" cy="2.8" r="0.9" fill="#5a7896"/></svg>
<svg class="b" style="left:660px;top:596px;" width="8" height="8" viewBox="0 0 8 8"><path d="M7 1 V7 H1 Z" fill="#4a9ae0"/><path d="M7.4 2 V7.4 H2" stroke="#9cc8f0" stroke-width="0.7" fill="none"/></svg>
</div>
</body></html>
